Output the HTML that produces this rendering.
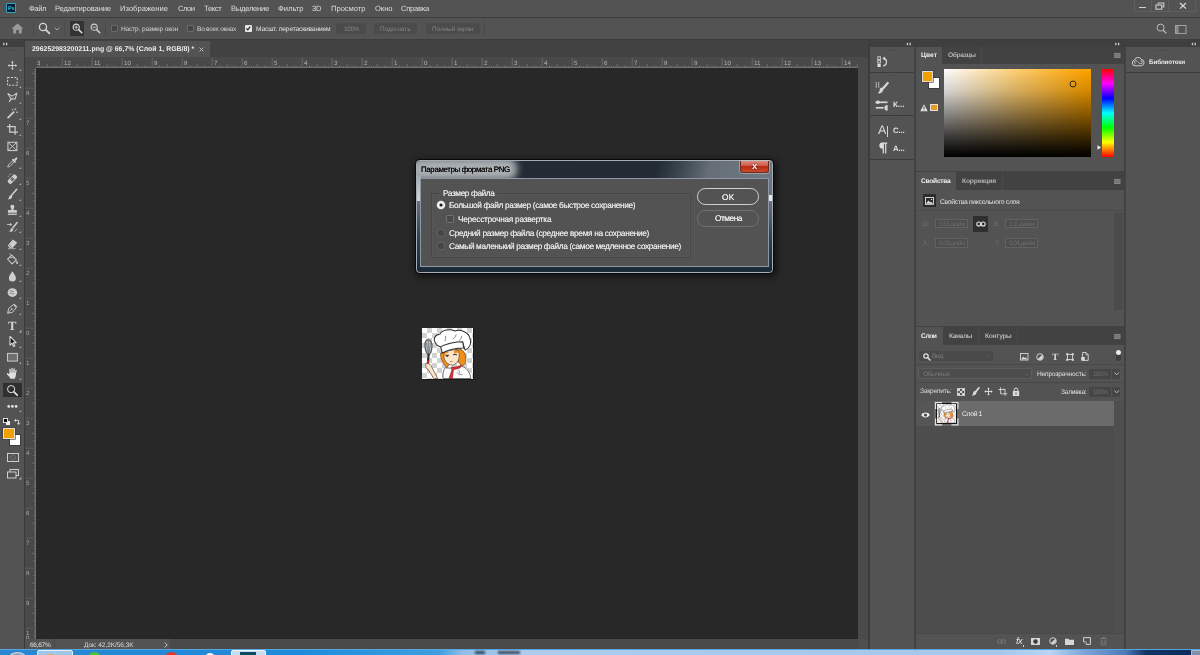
<!DOCTYPE html>
<html lang="ru"><head><meta charset="utf-8"><title>Photoshop</title>
<style>
html,body{margin:0;padding:0}
body{width:1200px;height:655px;overflow:hidden;position:relative;background:#424242;font-family:"Liberation Sans",sans-serif;}
#app{position:absolute;left:0;top:0;width:1200px;height:655px;overflow:hidden}
#app div,#app span,#app svg{position:absolute;display:block}
#app span{white-space:nowrap;will-change:transform;text-rendering:geometricPrecision}
#app svg{overflow:visible}
</style></head><body><div id="app">
<div style="left:0px;top:0px;width:1200px;height:17px;background:#535353;"></div>
<div style="left:0px;top:17px;width:1200px;height:1px;background:#3e3e3e;"></div>
<div style="left:6px;top:3px;width:10px;height:10px;background:#0a1f2b;border:1px solid #2fa3c7;box-sizing:border-box;border-radius:1px"></div>
<span style="left:7.6px;top:3.10px;font-size:5.6px;line-height:12px;color:#31c5f0;font-weight:bold;letter-spacing:-0.3px">Ps</span>
<span style="left:29px;top:3.20px;font-size:7.6px;line-height:12px;color:#dedede;letter-spacing:-0.421px;">Файл</span>
<span style="left:55px;top:3.20px;font-size:7.6px;line-height:12px;color:#dedede;letter-spacing:-0.135px;">Редактирование</span>
<span style="left:120px;top:3.20px;font-size:7.6px;line-height:12px;color:#dedede;letter-spacing:0.011px;">Изображение</span>
<span style="left:177.5px;top:3.20px;font-size:7.6px;line-height:12px;color:#dedede;letter-spacing:-0.495px;">Слои</span>
<span style="left:203.5px;top:3.20px;font-size:7.6px;line-height:12px;color:#dedede;letter-spacing:-0.327px;">Текст</span>
<span style="left:230.5px;top:3.20px;font-size:7.6px;line-height:12px;color:#dedede;letter-spacing:-0.252px;">Выделение</span>
<span style="left:277.5px;top:3.20px;font-size:7.6px;line-height:12px;color:#dedede;letter-spacing:-0.005px;">Фильтр</span>
<span style="left:312px;top:3.20px;font-size:7.6px;line-height:12px;color:#dedede;letter-spacing:-0.108px;">3D</span>
<span style="left:331px;top:3.20px;font-size:7.6px;line-height:12px;color:#dedede;letter-spacing:-0.026px;">Просмотр</span>
<span style="left:374.5px;top:3.20px;font-size:7.6px;line-height:12px;color:#dedede;letter-spacing:-0.040px;">Окно</span>
<span style="left:401px;top:3.20px;font-size:7.6px;line-height:12px;color:#dedede;letter-spacing:-0.259px;">Справка</span>
<div style="left:1134px;top:0px;width:62px;height:11.5px;background:transparent;border:1px solid #5e5e5e;border-top:none;box-sizing:border-box"></div>
<div style="left:1151px;top:0px;width:1px;height:11px;background:#5e5e5e;"></div>
<div style="left:1168px;top:0px;width:1px;height:11px;background:#5e5e5e;"></div>
<div style="left:1139.2px;top:7px;width:6.8px;height:1.4px;background:#d0d0d0;"></div>
<svg style="left:1155px;top:2px;" width="10" height="8" viewBox="0 0 10 8"><path d="M3.2 2.6V1h5.6v4H7.4" fill="none" stroke="#cfcfcf" stroke-width="1.1"/><rect x="1" y="3" width="5.8" height="4.2" fill="none" stroke="#cfcfcf" stroke-width="1.1"/></svg>
<svg style="left:1179px;top:2px;" width="8" height="8" viewBox="0 0 8 8"><path d="M1 1L7 6.6M7 1L1 6.6" stroke="#dcdcdc" stroke-width="1.2" fill="none"/></svg>
<div style="left:0px;top:18px;width:1200px;height:21px;background:#535353;"></div>
<div style="left:0px;top:39px;width:1200px;height:1px;background:#3c3c3c;"></div>
<svg style="left:11px;top:23px;" width="13" height="11" viewBox="0 0 13 11"><path d="M6.5 0.6L0.6 5.6h1.6V10.4h3V7h2.6v3.4h3V5.6h1.6z" fill="#9a9a9a"/></svg>
<div style="left:33px;top:21px;width:1px;height:15px;background:#4a4a4a;"></div>
<div style="left:64px;top:21px;width:1px;height:15px;background:#4a4a4a;"></div>
<div style="left:105px;top:21px;width:1px;height:15px;background:#4a4a4a;"></div>
<svg style="left:38px;top:22px;" width="13" height="13" viewBox="0 0 13 13"><circle cx="5" cy="5" r="3.6" fill="none" stroke="#d8d8d8" stroke-width="1.3"/><path d="M7.8 7.8L11.4 11.4" stroke="#d8d8d8" stroke-width="1.8" stroke-linecap="round"/></svg>
<svg style="left:54px;top:27px;" width="6" height="4" viewBox="0 0 6 4"><path d="M0.6 0.6L3 3L5.4 0.6" fill="none" stroke="#a8a8a8" stroke-width="1"/></svg>
<div style="left:69.5px;top:21px;width:14px;height:14.5px;background:#333333;"></div>
<svg style="left:71.5px;top:23px;" width="11" height="11" viewBox="0 0 11 11"><circle cx="4.2" cy="4.2" r="3.1" fill="none" stroke="#e0e0e0" stroke-width="1.1"/><path d="M6.6 6.6L9.8 9.8" stroke="#e0e0e0" stroke-width="1.5" stroke-linecap="round"/><path d="M2.6 4.2h3.2M4.2 2.6v3.2" stroke="#e0e0e0" stroke-width="0.9"/></svg>
<svg style="left:90px;top:23px;" width="11" height="11" viewBox="0 0 11 11"><circle cx="4.2" cy="4.2" r="3.1" fill="none" stroke="#cfcfcf" stroke-width="1.1"/><path d="M6.6 6.6L9.8 9.8" stroke="#cfcfcf" stroke-width="1.5" stroke-linecap="round"/><path d="M2.6 4.2h3.2" stroke="#cfcfcf" stroke-width="0.9"/></svg>
<div style="left:111px;top:25px;width:6.5px;height:6.5px;background:#454545;border:1px solid #6a6a6a;box-sizing:border-box;border-radius:1px"></div>
<span style="left:121px;top:23.50px;font-size:6.6px;line-height:12px;color:#d2d2d2;letter-spacing:-0.170px;">Настр. размер окон</span>
<div style="left:187px;top:25px;width:6.5px;height:6.5px;background:#454545;border:1px solid #6a6a6a;box-sizing:border-box;border-radius:1px"></div>
<span style="left:197px;top:23.50px;font-size:6.6px;line-height:12px;color:#d2d2d2;letter-spacing:-0.267px;">Во всех окнах</span>
<div style="left:245px;top:25px;width:6.5px;height:6.5px;background:#e6e6e6;border-radius:1px"></div>
<svg style="left:245px;top:25px;" width="6.5" height="6.5" viewBox="0 0 6.5 6.5"><path d="M1.4 3.3L2.8 4.8L5.2 1.6" fill="none" stroke="#1e1e1e" stroke-width="1.1"/></svg>
<span style="left:255.5px;top:23.50px;font-size:6.6px;line-height:12px;color:#e4e4e4;letter-spacing:-0.127px;">Масшт. перетаскиванием</span>
<div style="left:336px;top:22.5px;width:29.5px;height:11.5px;background:#4b4b4b;border-radius:1px"></div>
<span style="left:344px;top:23.50px;font-size:6.4px;line-height:12px;color:#858585;letter-spacing:-0.342px;">100%</span>
<div style="left:374px;top:22.5px;width:43px;height:11.5px;background:#4b4b4b;border-radius:1px"></div>
<span style="left:380px;top:23.50px;font-size:6.4px;line-height:12px;color:#858585;letter-spacing:-0.041px;">Подогнать</span>
<div style="left:425.5px;top:22.5px;width:54.5px;height:11.5px;background:#4b4b4b;border-radius:1px"></div>
<span style="left:432px;top:23.50px;font-size:6.4px;line-height:12px;color:#858585;letter-spacing:-0.038px;">Полный экран</span>
<div style="left:484px;top:21px;width:1px;height:15px;background:#4a4a4a;"></div>
<svg style="left:1156px;top:23px;" width="12" height="12" viewBox="0 0 12 12"><circle cx="4.6" cy="4.6" r="3.5" fill="none" stroke="#bdbdbd" stroke-width="1"/><path d="M7.2 7.2L10.4 10.4" stroke="#bdbdbd" stroke-width="1.3"/></svg>
<svg style="left:1175px;top:24.5px;" width="12" height="9.5" viewBox="0 0 12 9.5"><rect x="0.5" y="0.5" width="10.5" height="8" fill="none" stroke="#a0a0a0" stroke-width="1"/><rect x="1" y="1" width="2.6" height="7" fill="#8a8a8a"/></svg>
<div style="left:0px;top:40px;width:24.2px;height:609px;background:#535353;"></div>
<div style="left:0px;top:40px;width:24.2px;height:6.5px;background:#3f3f3f;"></div>
<div style="left:24.2px;top:40px;width:1px;height:609px;background:#3a3a3a;"></div>
<svg style="left:2.5px;top:41.5px;" width="6" height="4" viewBox="0 0 6 4"><path d="M0.3 0.3L2.1 2L0.3 3.7zM3 0.3L4.8 2L3 3.7z" fill="#d0d0d0"/></svg>
<div style="left:6px;top:50px;width:13px;height:1px;background:#4c4c4c;"></div>
<div style="left:25.2px;top:41px;width:184.8px;height:16.2px;background:#535353;"></div>
<span style="left:31.5px;top:44.00px;font-size:6.9px;line-height:12px;color:#ededed;font-weight:bold;letter-spacing:0.025px;">296252983200211.png @ 66,7% (Слой 1, RGB/8) *</span>
<svg style="left:199px;top:47px;" width="5" height="5" viewBox="0 0 5 5"><path d="M0.6 0.6L4.4 4.4M4.4 0.6L0.6 4.4" stroke="#b8b8b8" stroke-width="1"/></svg>
<div style="left:25.2px;top:57.2px;width:832.6px;height:10.8px;background:#494949;"></div>
<div style="left:25.2px;top:57.2px;width:10.8px;height:581.8px;background:#494949;"></div>
<div style="left:36px;top:68px;width:821.8px;height:571px;background:#282828;"></div>
<div style="left:36px;top:67.2px;width:821.8px;height:0.8px;background:#6a6a6a;"></div>
<svg style="left:0px;top:0px;" width="1200" height="70" viewBox="0 0 1200 70"><rect x="37.42" y="66.30" width="0.8" height="1.7" fill="#7c7c7c"/><rect x="39.30" y="65.40" width="0.8" height="2.6" fill="#7c7c7c"/><rect x="41.17" y="66.30" width="0.8" height="1.7" fill="#7c7c7c"/><rect x="43.05" y="66.30" width="0.8" height="1.7" fill="#7c7c7c"/><rect x="44.92" y="66.30" width="0.8" height="1.7" fill="#7c7c7c"/><rect x="46.80" y="64.40" width="0.8" height="3.6" fill="#7c7c7c"/><rect x="48.67" y="66.30" width="0.8" height="1.7" fill="#7c7c7c"/><rect x="50.55" y="66.30" width="0.8" height="1.7" fill="#7c7c7c"/><rect x="52.42" y="66.30" width="0.8" height="1.7" fill="#7c7c7c"/><rect x="54.30" y="65.40" width="0.8" height="2.6" fill="#7c7c7c"/><rect x="56.17" y="66.30" width="0.8" height="1.7" fill="#7c7c7c"/><rect x="58.05" y="66.30" width="0.8" height="1.7" fill="#7c7c7c"/><rect x="59.92" y="66.30" width="0.8" height="1.7" fill="#7c7c7c"/><rect x="61.70" y="58" width="0.9" height="10" fill="#6c6c6c"/><rect x="63.67" y="66.30" width="0.8" height="1.7" fill="#7c7c7c"/><rect x="65.55" y="66.30" width="0.8" height="1.7" fill="#7c7c7c"/><rect x="67.42" y="66.30" width="0.8" height="1.7" fill="#7c7c7c"/><rect x="69.30" y="65.40" width="0.8" height="2.6" fill="#7c7c7c"/><rect x="71.17" y="66.30" width="0.8" height="1.7" fill="#7c7c7c"/><rect x="73.05" y="66.30" width="0.8" height="1.7" fill="#7c7c7c"/><rect x="74.92" y="66.30" width="0.8" height="1.7" fill="#7c7c7c"/><rect x="76.80" y="64.40" width="0.8" height="3.6" fill="#7c7c7c"/><rect x="78.67" y="66.30" width="0.8" height="1.7" fill="#7c7c7c"/><rect x="80.55" y="66.30" width="0.8" height="1.7" fill="#7c7c7c"/><rect x="82.42" y="66.30" width="0.8" height="1.7" fill="#7c7c7c"/><rect x="84.30" y="65.40" width="0.8" height="2.6" fill="#7c7c7c"/><rect x="86.17" y="66.30" width="0.8" height="1.7" fill="#7c7c7c"/><rect x="88.05" y="66.30" width="0.8" height="1.7" fill="#7c7c7c"/><rect x="89.92" y="66.30" width="0.8" height="1.7" fill="#7c7c7c"/><rect x="91.70" y="58" width="0.9" height="10" fill="#6c6c6c"/><rect x="93.67" y="66.30" width="0.8" height="1.7" fill="#7c7c7c"/><rect x="95.55" y="66.30" width="0.8" height="1.7" fill="#7c7c7c"/><rect x="97.42" y="66.30" width="0.8" height="1.7" fill="#7c7c7c"/><rect x="99.30" y="65.40" width="0.8" height="2.6" fill="#7c7c7c"/><rect x="101.17" y="66.30" width="0.8" height="1.7" fill="#7c7c7c"/><rect x="103.05" y="66.30" width="0.8" height="1.7" fill="#7c7c7c"/><rect x="104.92" y="66.30" width="0.8" height="1.7" fill="#7c7c7c"/><rect x="106.80" y="64.40" width="0.8" height="3.6" fill="#7c7c7c"/><rect x="108.67" y="66.30" width="0.8" height="1.7" fill="#7c7c7c"/><rect x="110.55" y="66.30" width="0.8" height="1.7" fill="#7c7c7c"/><rect x="112.42" y="66.30" width="0.8" height="1.7" fill="#7c7c7c"/><rect x="114.30" y="65.40" width="0.8" height="2.6" fill="#7c7c7c"/><rect x="116.17" y="66.30" width="0.8" height="1.7" fill="#7c7c7c"/><rect x="118.05" y="66.30" width="0.8" height="1.7" fill="#7c7c7c"/><rect x="119.92" y="66.30" width="0.8" height="1.7" fill="#7c7c7c"/><rect x="121.70" y="58" width="0.9" height="10" fill="#6c6c6c"/><rect x="123.67" y="66.30" width="0.8" height="1.7" fill="#7c7c7c"/><rect x="125.55" y="66.30" width="0.8" height="1.7" fill="#7c7c7c"/><rect x="127.42" y="66.30" width="0.8" height="1.7" fill="#7c7c7c"/><rect x="129.30" y="65.40" width="0.8" height="2.6" fill="#7c7c7c"/><rect x="131.17" y="66.30" width="0.8" height="1.7" fill="#7c7c7c"/><rect x="133.05" y="66.30" width="0.8" height="1.7" fill="#7c7c7c"/><rect x="134.92" y="66.30" width="0.8" height="1.7" fill="#7c7c7c"/><rect x="136.80" y="64.40" width="0.8" height="3.6" fill="#7c7c7c"/><rect x="138.67" y="66.30" width="0.8" height="1.7" fill="#7c7c7c"/><rect x="140.55" y="66.30" width="0.8" height="1.7" fill="#7c7c7c"/><rect x="142.42" y="66.30" width="0.8" height="1.7" fill="#7c7c7c"/><rect x="144.30" y="65.40" width="0.8" height="2.6" fill="#7c7c7c"/><rect x="146.17" y="66.30" width="0.8" height="1.7" fill="#7c7c7c"/><rect x="148.05" y="66.30" width="0.8" height="1.7" fill="#7c7c7c"/><rect x="149.92" y="66.30" width="0.8" height="1.7" fill="#7c7c7c"/><rect x="151.70" y="58" width="0.9" height="10" fill="#6c6c6c"/><rect x="153.67" y="66.30" width="0.8" height="1.7" fill="#7c7c7c"/><rect x="155.55" y="66.30" width="0.8" height="1.7" fill="#7c7c7c"/><rect x="157.42" y="66.30" width="0.8" height="1.7" fill="#7c7c7c"/><rect x="159.30" y="65.40" width="0.8" height="2.6" fill="#7c7c7c"/><rect x="161.17" y="66.30" width="0.8" height="1.7" fill="#7c7c7c"/><rect x="163.05" y="66.30" width="0.8" height="1.7" fill="#7c7c7c"/><rect x="164.92" y="66.30" width="0.8" height="1.7" fill="#7c7c7c"/><rect x="166.80" y="64.40" width="0.8" height="3.6" fill="#7c7c7c"/><rect x="168.67" y="66.30" width="0.8" height="1.7" fill="#7c7c7c"/><rect x="170.55" y="66.30" width="0.8" height="1.7" fill="#7c7c7c"/><rect x="172.42" y="66.30" width="0.8" height="1.7" fill="#7c7c7c"/><rect x="174.30" y="65.40" width="0.8" height="2.6" fill="#7c7c7c"/><rect x="176.17" y="66.30" width="0.8" height="1.7" fill="#7c7c7c"/><rect x="178.05" y="66.30" width="0.8" height="1.7" fill="#7c7c7c"/><rect x="179.92" y="66.30" width="0.8" height="1.7" fill="#7c7c7c"/><rect x="181.70" y="58" width="0.9" height="10" fill="#6c6c6c"/><rect x="183.67" y="66.30" width="0.8" height="1.7" fill="#7c7c7c"/><rect x="185.55" y="66.30" width="0.8" height="1.7" fill="#7c7c7c"/><rect x="187.42" y="66.30" width="0.8" height="1.7" fill="#7c7c7c"/><rect x="189.30" y="65.40" width="0.8" height="2.6" fill="#7c7c7c"/><rect x="191.17" y="66.30" width="0.8" height="1.7" fill="#7c7c7c"/><rect x="193.05" y="66.30" width="0.8" height="1.7" fill="#7c7c7c"/><rect x="194.92" y="66.30" width="0.8" height="1.7" fill="#7c7c7c"/><rect x="196.80" y="64.40" width="0.8" height="3.6" fill="#7c7c7c"/><rect x="198.67" y="66.30" width="0.8" height="1.7" fill="#7c7c7c"/><rect x="200.55" y="66.30" width="0.8" height="1.7" fill="#7c7c7c"/><rect x="202.42" y="66.30" width="0.8" height="1.7" fill="#7c7c7c"/><rect x="204.30" y="65.40" width="0.8" height="2.6" fill="#7c7c7c"/><rect x="206.17" y="66.30" width="0.8" height="1.7" fill="#7c7c7c"/><rect x="208.05" y="66.30" width="0.8" height="1.7" fill="#7c7c7c"/><rect x="209.92" y="66.30" width="0.8" height="1.7" fill="#7c7c7c"/><rect x="211.70" y="58" width="0.9" height="10" fill="#6c6c6c"/><rect x="213.67" y="66.30" width="0.8" height="1.7" fill="#7c7c7c"/><rect x="215.55" y="66.30" width="0.8" height="1.7" fill="#7c7c7c"/><rect x="217.42" y="66.30" width="0.8" height="1.7" fill="#7c7c7c"/><rect x="219.30" y="65.40" width="0.8" height="2.6" fill="#7c7c7c"/><rect x="221.17" y="66.30" width="0.8" height="1.7" fill="#7c7c7c"/><rect x="223.05" y="66.30" width="0.8" height="1.7" fill="#7c7c7c"/><rect x="224.92" y="66.30" width="0.8" height="1.7" fill="#7c7c7c"/><rect x="226.80" y="64.40" width="0.8" height="3.6" fill="#7c7c7c"/><rect x="228.67" y="66.30" width="0.8" height="1.7" fill="#7c7c7c"/><rect x="230.55" y="66.30" width="0.8" height="1.7" fill="#7c7c7c"/><rect x="232.42" y="66.30" width="0.8" height="1.7" fill="#7c7c7c"/><rect x="234.30" y="65.40" width="0.8" height="2.6" fill="#7c7c7c"/><rect x="236.17" y="66.30" width="0.8" height="1.7" fill="#7c7c7c"/><rect x="238.05" y="66.30" width="0.8" height="1.7" fill="#7c7c7c"/><rect x="239.92" y="66.30" width="0.8" height="1.7" fill="#7c7c7c"/><rect x="241.70" y="58" width="0.9" height="10" fill="#6c6c6c"/><rect x="243.67" y="66.30" width="0.8" height="1.7" fill="#7c7c7c"/><rect x="245.55" y="66.30" width="0.8" height="1.7" fill="#7c7c7c"/><rect x="247.42" y="66.30" width="0.8" height="1.7" fill="#7c7c7c"/><rect x="249.30" y="65.40" width="0.8" height="2.6" fill="#7c7c7c"/><rect x="251.17" y="66.30" width="0.8" height="1.7" fill="#7c7c7c"/><rect x="253.05" y="66.30" width="0.8" height="1.7" fill="#7c7c7c"/><rect x="254.92" y="66.30" width="0.8" height="1.7" fill="#7c7c7c"/><rect x="256.80" y="64.40" width="0.8" height="3.6" fill="#7c7c7c"/><rect x="258.68" y="66.30" width="0.8" height="1.7" fill="#7c7c7c"/><rect x="260.55" y="66.30" width="0.8" height="1.7" fill="#7c7c7c"/><rect x="262.43" y="66.30" width="0.8" height="1.7" fill="#7c7c7c"/><rect x="264.30" y="65.40" width="0.8" height="2.6" fill="#7c7c7c"/><rect x="266.18" y="66.30" width="0.8" height="1.7" fill="#7c7c7c"/><rect x="268.05" y="66.30" width="0.8" height="1.7" fill="#7c7c7c"/><rect x="269.93" y="66.30" width="0.8" height="1.7" fill="#7c7c7c"/><rect x="271.70" y="58" width="0.9" height="10" fill="#6c6c6c"/><rect x="273.68" y="66.30" width="0.8" height="1.7" fill="#7c7c7c"/><rect x="275.55" y="66.30" width="0.8" height="1.7" fill="#7c7c7c"/><rect x="277.43" y="66.30" width="0.8" height="1.7" fill="#7c7c7c"/><rect x="279.30" y="65.40" width="0.8" height="2.6" fill="#7c7c7c"/><rect x="281.18" y="66.30" width="0.8" height="1.7" fill="#7c7c7c"/><rect x="283.05" y="66.30" width="0.8" height="1.7" fill="#7c7c7c"/><rect x="284.93" y="66.30" width="0.8" height="1.7" fill="#7c7c7c"/><rect x="286.80" y="64.40" width="0.8" height="3.6" fill="#7c7c7c"/><rect x="288.68" y="66.30" width="0.8" height="1.7" fill="#7c7c7c"/><rect x="290.55" y="66.30" width="0.8" height="1.7" fill="#7c7c7c"/><rect x="292.43" y="66.30" width="0.8" height="1.7" fill="#7c7c7c"/><rect x="294.30" y="65.40" width="0.8" height="2.6" fill="#7c7c7c"/><rect x="296.18" y="66.30" width="0.8" height="1.7" fill="#7c7c7c"/><rect x="298.05" y="66.30" width="0.8" height="1.7" fill="#7c7c7c"/><rect x="299.93" y="66.30" width="0.8" height="1.7" fill="#7c7c7c"/><rect x="301.70" y="58" width="0.9" height="10" fill="#6c6c6c"/><rect x="303.68" y="66.30" width="0.8" height="1.7" fill="#7c7c7c"/><rect x="305.55" y="66.30" width="0.8" height="1.7" fill="#7c7c7c"/><rect x="307.43" y="66.30" width="0.8" height="1.7" fill="#7c7c7c"/><rect x="309.30" y="65.40" width="0.8" height="2.6" fill="#7c7c7c"/><rect x="311.18" y="66.30" width="0.8" height="1.7" fill="#7c7c7c"/><rect x="313.05" y="66.30" width="0.8" height="1.7" fill="#7c7c7c"/><rect x="314.93" y="66.30" width="0.8" height="1.7" fill="#7c7c7c"/><rect x="316.80" y="64.40" width="0.8" height="3.6" fill="#7c7c7c"/><rect x="318.68" y="66.30" width="0.8" height="1.7" fill="#7c7c7c"/><rect x="320.55" y="66.30" width="0.8" height="1.7" fill="#7c7c7c"/><rect x="322.43" y="66.30" width="0.8" height="1.7" fill="#7c7c7c"/><rect x="324.30" y="65.40" width="0.8" height="2.6" fill="#7c7c7c"/><rect x="326.18" y="66.30" width="0.8" height="1.7" fill="#7c7c7c"/><rect x="328.05" y="66.30" width="0.8" height="1.7" fill="#7c7c7c"/><rect x="329.93" y="66.30" width="0.8" height="1.7" fill="#7c7c7c"/><rect x="331.70" y="58" width="0.9" height="10" fill="#6c6c6c"/><rect x="333.68" y="66.30" width="0.8" height="1.7" fill="#7c7c7c"/><rect x="335.55" y="66.30" width="0.8" height="1.7" fill="#7c7c7c"/><rect x="337.43" y="66.30" width="0.8" height="1.7" fill="#7c7c7c"/><rect x="339.30" y="65.40" width="0.8" height="2.6" fill="#7c7c7c"/><rect x="341.18" y="66.30" width="0.8" height="1.7" fill="#7c7c7c"/><rect x="343.05" y="66.30" width="0.8" height="1.7" fill="#7c7c7c"/><rect x="344.93" y="66.30" width="0.8" height="1.7" fill="#7c7c7c"/><rect x="346.80" y="64.40" width="0.8" height="3.6" fill="#7c7c7c"/><rect x="348.68" y="66.30" width="0.8" height="1.7" fill="#7c7c7c"/><rect x="350.55" y="66.30" width="0.8" height="1.7" fill="#7c7c7c"/><rect x="352.43" y="66.30" width="0.8" height="1.7" fill="#7c7c7c"/><rect x="354.30" y="65.40" width="0.8" height="2.6" fill="#7c7c7c"/><rect x="356.18" y="66.30" width="0.8" height="1.7" fill="#7c7c7c"/><rect x="358.05" y="66.30" width="0.8" height="1.7" fill="#7c7c7c"/><rect x="359.93" y="66.30" width="0.8" height="1.7" fill="#7c7c7c"/><rect x="361.70" y="58" width="0.9" height="10" fill="#6c6c6c"/><rect x="363.68" y="66.30" width="0.8" height="1.7" fill="#7c7c7c"/><rect x="365.55" y="66.30" width="0.8" height="1.7" fill="#7c7c7c"/><rect x="367.43" y="66.30" width="0.8" height="1.7" fill="#7c7c7c"/><rect x="369.30" y="65.40" width="0.8" height="2.6" fill="#7c7c7c"/><rect x="371.18" y="66.30" width="0.8" height="1.7" fill="#7c7c7c"/><rect x="373.05" y="66.30" width="0.8" height="1.7" fill="#7c7c7c"/><rect x="374.93" y="66.30" width="0.8" height="1.7" fill="#7c7c7c"/><rect x="376.80" y="64.40" width="0.8" height="3.6" fill="#7c7c7c"/><rect x="378.68" y="66.30" width="0.8" height="1.7" fill="#7c7c7c"/><rect x="380.55" y="66.30" width="0.8" height="1.7" fill="#7c7c7c"/><rect x="382.43" y="66.30" width="0.8" height="1.7" fill="#7c7c7c"/><rect x="384.30" y="65.40" width="0.8" height="2.6" fill="#7c7c7c"/><rect x="386.18" y="66.30" width="0.8" height="1.7" fill="#7c7c7c"/><rect x="388.05" y="66.30" width="0.8" height="1.7" fill="#7c7c7c"/><rect x="389.93" y="66.30" width="0.8" height="1.7" fill="#7c7c7c"/><rect x="391.70" y="58" width="0.9" height="10" fill="#6c6c6c"/><rect x="393.68" y="66.30" width="0.8" height="1.7" fill="#7c7c7c"/><rect x="395.55" y="66.30" width="0.8" height="1.7" fill="#7c7c7c"/><rect x="397.43" y="66.30" width="0.8" height="1.7" fill="#7c7c7c"/><rect x="399.30" y="65.40" width="0.8" height="2.6" fill="#7c7c7c"/><rect x="401.18" y="66.30" width="0.8" height="1.7" fill="#7c7c7c"/><rect x="403.05" y="66.30" width="0.8" height="1.7" fill="#7c7c7c"/><rect x="404.93" y="66.30" width="0.8" height="1.7" fill="#7c7c7c"/><rect x="406.80" y="64.40" width="0.8" height="3.6" fill="#7c7c7c"/><rect x="408.68" y="66.30" width="0.8" height="1.7" fill="#7c7c7c"/><rect x="410.55" y="66.30" width="0.8" height="1.7" fill="#7c7c7c"/><rect x="412.43" y="66.30" width="0.8" height="1.7" fill="#7c7c7c"/><rect x="414.30" y="65.40" width="0.8" height="2.6" fill="#7c7c7c"/><rect x="416.18" y="66.30" width="0.8" height="1.7" fill="#7c7c7c"/><rect x="418.05" y="66.30" width="0.8" height="1.7" fill="#7c7c7c"/><rect x="419.93" y="66.30" width="0.8" height="1.7" fill="#7c7c7c"/><rect x="421.70" y="58" width="0.9" height="10" fill="#6c6c6c"/><rect x="423.68" y="66.30" width="0.8" height="1.7" fill="#7c7c7c"/><rect x="425.55" y="66.30" width="0.8" height="1.7" fill="#7c7c7c"/><rect x="427.43" y="66.30" width="0.8" height="1.7" fill="#7c7c7c"/><rect x="429.30" y="65.40" width="0.8" height="2.6" fill="#7c7c7c"/><rect x="431.18" y="66.30" width="0.8" height="1.7" fill="#7c7c7c"/><rect x="433.05" y="66.30" width="0.8" height="1.7" fill="#7c7c7c"/><rect x="434.93" y="66.30" width="0.8" height="1.7" fill="#7c7c7c"/><rect x="436.80" y="64.40" width="0.8" height="3.6" fill="#7c7c7c"/><rect x="438.68" y="66.30" width="0.8" height="1.7" fill="#7c7c7c"/><rect x="440.55" y="66.30" width="0.8" height="1.7" fill="#7c7c7c"/><rect x="442.43" y="66.30" width="0.8" height="1.7" fill="#7c7c7c"/><rect x="444.30" y="65.40" width="0.8" height="2.6" fill="#7c7c7c"/><rect x="446.18" y="66.30" width="0.8" height="1.7" fill="#7c7c7c"/><rect x="448.05" y="66.30" width="0.8" height="1.7" fill="#7c7c7c"/><rect x="449.93" y="66.30" width="0.8" height="1.7" fill="#7c7c7c"/><rect x="451.70" y="58" width="0.9" height="10" fill="#6c6c6c"/><rect x="453.68" y="66.30" width="0.8" height="1.7" fill="#7c7c7c"/><rect x="455.55" y="66.30" width="0.8" height="1.7" fill="#7c7c7c"/><rect x="457.43" y="66.30" width="0.8" height="1.7" fill="#7c7c7c"/><rect x="459.30" y="65.40" width="0.8" height="2.6" fill="#7c7c7c"/><rect x="461.18" y="66.30" width="0.8" height="1.7" fill="#7c7c7c"/><rect x="463.05" y="66.30" width="0.8" height="1.7" fill="#7c7c7c"/><rect x="464.93" y="66.30" width="0.8" height="1.7" fill="#7c7c7c"/><rect x="466.80" y="64.40" width="0.8" height="3.6" fill="#7c7c7c"/><rect x="468.68" y="66.30" width="0.8" height="1.7" fill="#7c7c7c"/><rect x="470.55" y="66.30" width="0.8" height="1.7" fill="#7c7c7c"/><rect x="472.43" y="66.30" width="0.8" height="1.7" fill="#7c7c7c"/><rect x="474.30" y="65.40" width="0.8" height="2.6" fill="#7c7c7c"/><rect x="476.18" y="66.30" width="0.8" height="1.7" fill="#7c7c7c"/><rect x="478.05" y="66.30" width="0.8" height="1.7" fill="#7c7c7c"/><rect x="479.93" y="66.30" width="0.8" height="1.7" fill="#7c7c7c"/><rect x="481.70" y="58" width="0.9" height="10" fill="#6c6c6c"/><rect x="483.68" y="66.30" width="0.8" height="1.7" fill="#7c7c7c"/><rect x="485.55" y="66.30" width="0.8" height="1.7" fill="#7c7c7c"/><rect x="487.43" y="66.30" width="0.8" height="1.7" fill="#7c7c7c"/><rect x="489.30" y="65.40" width="0.8" height="2.6" fill="#7c7c7c"/><rect x="491.18" y="66.30" width="0.8" height="1.7" fill="#7c7c7c"/><rect x="493.05" y="66.30" width="0.8" height="1.7" fill="#7c7c7c"/><rect x="494.93" y="66.30" width="0.8" height="1.7" fill="#7c7c7c"/><rect x="496.80" y="64.40" width="0.8" height="3.6" fill="#7c7c7c"/><rect x="498.68" y="66.30" width="0.8" height="1.7" fill="#7c7c7c"/><rect x="500.55" y="66.30" width="0.8" height="1.7" fill="#7c7c7c"/><rect x="502.43" y="66.30" width="0.8" height="1.7" fill="#7c7c7c"/><rect x="504.30" y="65.40" width="0.8" height="2.6" fill="#7c7c7c"/><rect x="506.18" y="66.30" width="0.8" height="1.7" fill="#7c7c7c"/><rect x="508.05" y="66.30" width="0.8" height="1.7" fill="#7c7c7c"/><rect x="509.93" y="66.30" width="0.8" height="1.7" fill="#7c7c7c"/><rect x="511.70" y="58" width="0.9" height="10" fill="#6c6c6c"/><rect x="513.68" y="66.30" width="0.8" height="1.7" fill="#7c7c7c"/><rect x="515.55" y="66.30" width="0.8" height="1.7" fill="#7c7c7c"/><rect x="517.43" y="66.30" width="0.8" height="1.7" fill="#7c7c7c"/><rect x="519.30" y="65.40" width="0.8" height="2.6" fill="#7c7c7c"/><rect x="521.18" y="66.30" width="0.8" height="1.7" fill="#7c7c7c"/><rect x="523.05" y="66.30" width="0.8" height="1.7" fill="#7c7c7c"/><rect x="524.93" y="66.30" width="0.8" height="1.7" fill="#7c7c7c"/><rect x="526.80" y="64.40" width="0.8" height="3.6" fill="#7c7c7c"/><rect x="528.68" y="66.30" width="0.8" height="1.7" fill="#7c7c7c"/><rect x="530.55" y="66.30" width="0.8" height="1.7" fill="#7c7c7c"/><rect x="532.43" y="66.30" width="0.8" height="1.7" fill="#7c7c7c"/><rect x="534.30" y="65.40" width="0.8" height="2.6" fill="#7c7c7c"/><rect x="536.18" y="66.30" width="0.8" height="1.7" fill="#7c7c7c"/><rect x="538.05" y="66.30" width="0.8" height="1.7" fill="#7c7c7c"/><rect x="539.93" y="66.30" width="0.8" height="1.7" fill="#7c7c7c"/><rect x="541.70" y="58" width="0.9" height="10" fill="#6c6c6c"/><rect x="543.68" y="66.30" width="0.8" height="1.7" fill="#7c7c7c"/><rect x="545.55" y="66.30" width="0.8" height="1.7" fill="#7c7c7c"/><rect x="547.43" y="66.30" width="0.8" height="1.7" fill="#7c7c7c"/><rect x="549.30" y="65.40" width="0.8" height="2.6" fill="#7c7c7c"/><rect x="551.18" y="66.30" width="0.8" height="1.7" fill="#7c7c7c"/><rect x="553.05" y="66.30" width="0.8" height="1.7" fill="#7c7c7c"/><rect x="554.93" y="66.30" width="0.8" height="1.7" fill="#7c7c7c"/><rect x="556.80" y="64.40" width="0.8" height="3.6" fill="#7c7c7c"/><rect x="558.68" y="66.30" width="0.8" height="1.7" fill="#7c7c7c"/><rect x="560.55" y="66.30" width="0.8" height="1.7" fill="#7c7c7c"/><rect x="562.43" y="66.30" width="0.8" height="1.7" fill="#7c7c7c"/><rect x="564.30" y="65.40" width="0.8" height="2.6" fill="#7c7c7c"/><rect x="566.18" y="66.30" width="0.8" height="1.7" fill="#7c7c7c"/><rect x="568.05" y="66.30" width="0.8" height="1.7" fill="#7c7c7c"/><rect x="569.93" y="66.30" width="0.8" height="1.7" fill="#7c7c7c"/><rect x="571.70" y="58" width="0.9" height="10" fill="#6c6c6c"/><rect x="573.68" y="66.30" width="0.8" height="1.7" fill="#7c7c7c"/><rect x="575.55" y="66.30" width="0.8" height="1.7" fill="#7c7c7c"/><rect x="577.43" y="66.30" width="0.8" height="1.7" fill="#7c7c7c"/><rect x="579.30" y="65.40" width="0.8" height="2.6" fill="#7c7c7c"/><rect x="581.18" y="66.30" width="0.8" height="1.7" fill="#7c7c7c"/><rect x="583.05" y="66.30" width="0.8" height="1.7" fill="#7c7c7c"/><rect x="584.93" y="66.30" width="0.8" height="1.7" fill="#7c7c7c"/><rect x="586.80" y="64.40" width="0.8" height="3.6" fill="#7c7c7c"/><rect x="588.68" y="66.30" width="0.8" height="1.7" fill="#7c7c7c"/><rect x="590.55" y="66.30" width="0.8" height="1.7" fill="#7c7c7c"/><rect x="592.43" y="66.30" width="0.8" height="1.7" fill="#7c7c7c"/><rect x="594.30" y="65.40" width="0.8" height="2.6" fill="#7c7c7c"/><rect x="596.18" y="66.30" width="0.8" height="1.7" fill="#7c7c7c"/><rect x="598.05" y="66.30" width="0.8" height="1.7" fill="#7c7c7c"/><rect x="599.93" y="66.30" width="0.8" height="1.7" fill="#7c7c7c"/><rect x="601.70" y="58" width="0.9" height="10" fill="#6c6c6c"/><rect x="603.68" y="66.30" width="0.8" height="1.7" fill="#7c7c7c"/><rect x="605.55" y="66.30" width="0.8" height="1.7" fill="#7c7c7c"/><rect x="607.43" y="66.30" width="0.8" height="1.7" fill="#7c7c7c"/><rect x="609.30" y="65.40" width="0.8" height="2.6" fill="#7c7c7c"/><rect x="611.18" y="66.30" width="0.8" height="1.7" fill="#7c7c7c"/><rect x="613.05" y="66.30" width="0.8" height="1.7" fill="#7c7c7c"/><rect x="614.93" y="66.30" width="0.8" height="1.7" fill="#7c7c7c"/><rect x="616.80" y="64.40" width="0.8" height="3.6" fill="#7c7c7c"/><rect x="618.68" y="66.30" width="0.8" height="1.7" fill="#7c7c7c"/><rect x="620.55" y="66.30" width="0.8" height="1.7" fill="#7c7c7c"/><rect x="622.43" y="66.30" width="0.8" height="1.7" fill="#7c7c7c"/><rect x="624.30" y="65.40" width="0.8" height="2.6" fill="#7c7c7c"/><rect x="626.18" y="66.30" width="0.8" height="1.7" fill="#7c7c7c"/><rect x="628.05" y="66.30" width="0.8" height="1.7" fill="#7c7c7c"/><rect x="629.93" y="66.30" width="0.8" height="1.7" fill="#7c7c7c"/><rect x="631.70" y="58" width="0.9" height="10" fill="#6c6c6c"/><rect x="633.68" y="66.30" width="0.8" height="1.7" fill="#7c7c7c"/><rect x="635.55" y="66.30" width="0.8" height="1.7" fill="#7c7c7c"/><rect x="637.43" y="66.30" width="0.8" height="1.7" fill="#7c7c7c"/><rect x="639.30" y="65.40" width="0.8" height="2.6" fill="#7c7c7c"/><rect x="641.18" y="66.30" width="0.8" height="1.7" fill="#7c7c7c"/><rect x="643.05" y="66.30" width="0.8" height="1.7" fill="#7c7c7c"/><rect x="644.93" y="66.30" width="0.8" height="1.7" fill="#7c7c7c"/><rect x="646.80" y="64.40" width="0.8" height="3.6" fill="#7c7c7c"/><rect x="648.68" y="66.30" width="0.8" height="1.7" fill="#7c7c7c"/><rect x="650.55" y="66.30" width="0.8" height="1.7" fill="#7c7c7c"/><rect x="652.43" y="66.30" width="0.8" height="1.7" fill="#7c7c7c"/><rect x="654.30" y="65.40" width="0.8" height="2.6" fill="#7c7c7c"/><rect x="656.18" y="66.30" width="0.8" height="1.7" fill="#7c7c7c"/><rect x="658.05" y="66.30" width="0.8" height="1.7" fill="#7c7c7c"/><rect x="659.93" y="66.30" width="0.8" height="1.7" fill="#7c7c7c"/><rect x="661.70" y="58" width="0.9" height="10" fill="#6c6c6c"/><rect x="663.68" y="66.30" width="0.8" height="1.7" fill="#7c7c7c"/><rect x="665.55" y="66.30" width="0.8" height="1.7" fill="#7c7c7c"/><rect x="667.43" y="66.30" width="0.8" height="1.7" fill="#7c7c7c"/><rect x="669.30" y="65.40" width="0.8" height="2.6" fill="#7c7c7c"/><rect x="671.18" y="66.30" width="0.8" height="1.7" fill="#7c7c7c"/><rect x="673.05" y="66.30" width="0.8" height="1.7" fill="#7c7c7c"/><rect x="674.93" y="66.30" width="0.8" height="1.7" fill="#7c7c7c"/><rect x="676.80" y="64.40" width="0.8" height="3.6" fill="#7c7c7c"/><rect x="678.68" y="66.30" width="0.8" height="1.7" fill="#7c7c7c"/><rect x="680.55" y="66.30" width="0.8" height="1.7" fill="#7c7c7c"/><rect x="682.43" y="66.30" width="0.8" height="1.7" fill="#7c7c7c"/><rect x="684.30" y="65.40" width="0.8" height="2.6" fill="#7c7c7c"/><rect x="686.18" y="66.30" width="0.8" height="1.7" fill="#7c7c7c"/><rect x="688.05" y="66.30" width="0.8" height="1.7" fill="#7c7c7c"/><rect x="689.93" y="66.30" width="0.8" height="1.7" fill="#7c7c7c"/><rect x="691.70" y="58" width="0.9" height="10" fill="#6c6c6c"/><rect x="693.68" y="66.30" width="0.8" height="1.7" fill="#7c7c7c"/><rect x="695.55" y="66.30" width="0.8" height="1.7" fill="#7c7c7c"/><rect x="697.43" y="66.30" width="0.8" height="1.7" fill="#7c7c7c"/><rect x="699.30" y="65.40" width="0.8" height="2.6" fill="#7c7c7c"/><rect x="701.18" y="66.30" width="0.8" height="1.7" fill="#7c7c7c"/><rect x="703.05" y="66.30" width="0.8" height="1.7" fill="#7c7c7c"/><rect x="704.93" y="66.30" width="0.8" height="1.7" fill="#7c7c7c"/><rect x="706.80" y="64.40" width="0.8" height="3.6" fill="#7c7c7c"/><rect x="708.68" y="66.30" width="0.8" height="1.7" fill="#7c7c7c"/><rect x="710.55" y="66.30" width="0.8" height="1.7" fill="#7c7c7c"/><rect x="712.43" y="66.30" width="0.8" height="1.7" fill="#7c7c7c"/><rect x="714.30" y="65.40" width="0.8" height="2.6" fill="#7c7c7c"/><rect x="716.18" y="66.30" width="0.8" height="1.7" fill="#7c7c7c"/><rect x="718.05" y="66.30" width="0.8" height="1.7" fill="#7c7c7c"/><rect x="719.93" y="66.30" width="0.8" height="1.7" fill="#7c7c7c"/><rect x="721.70" y="58" width="0.9" height="10" fill="#6c6c6c"/><rect x="723.68" y="66.30" width="0.8" height="1.7" fill="#7c7c7c"/><rect x="725.55" y="66.30" width="0.8" height="1.7" fill="#7c7c7c"/><rect x="727.43" y="66.30" width="0.8" height="1.7" fill="#7c7c7c"/><rect x="729.30" y="65.40" width="0.8" height="2.6" fill="#7c7c7c"/><rect x="731.18" y="66.30" width="0.8" height="1.7" fill="#7c7c7c"/><rect x="733.05" y="66.30" width="0.8" height="1.7" fill="#7c7c7c"/><rect x="734.93" y="66.30" width="0.8" height="1.7" fill="#7c7c7c"/><rect x="736.80" y="64.40" width="0.8" height="3.6" fill="#7c7c7c"/><rect x="738.68" y="66.30" width="0.8" height="1.7" fill="#7c7c7c"/><rect x="740.55" y="66.30" width="0.8" height="1.7" fill="#7c7c7c"/><rect x="742.43" y="66.30" width="0.8" height="1.7" fill="#7c7c7c"/><rect x="744.30" y="65.40" width="0.8" height="2.6" fill="#7c7c7c"/><rect x="746.18" y="66.30" width="0.8" height="1.7" fill="#7c7c7c"/><rect x="748.05" y="66.30" width="0.8" height="1.7" fill="#7c7c7c"/><rect x="749.93" y="66.30" width="0.8" height="1.7" fill="#7c7c7c"/><rect x="751.70" y="58" width="0.9" height="10" fill="#6c6c6c"/><rect x="753.68" y="66.30" width="0.8" height="1.7" fill="#7c7c7c"/><rect x="755.55" y="66.30" width="0.8" height="1.7" fill="#7c7c7c"/><rect x="757.43" y="66.30" width="0.8" height="1.7" fill="#7c7c7c"/><rect x="759.30" y="65.40" width="0.8" height="2.6" fill="#7c7c7c"/><rect x="761.18" y="66.30" width="0.8" height="1.7" fill="#7c7c7c"/><rect x="763.05" y="66.30" width="0.8" height="1.7" fill="#7c7c7c"/><rect x="764.93" y="66.30" width="0.8" height="1.7" fill="#7c7c7c"/><rect x="766.80" y="64.40" width="0.8" height="3.6" fill="#7c7c7c"/><rect x="768.68" y="66.30" width="0.8" height="1.7" fill="#7c7c7c"/><rect x="770.55" y="66.30" width="0.8" height="1.7" fill="#7c7c7c"/><rect x="772.43" y="66.30" width="0.8" height="1.7" fill="#7c7c7c"/><rect x="774.30" y="65.40" width="0.8" height="2.6" fill="#7c7c7c"/><rect x="776.18" y="66.30" width="0.8" height="1.7" fill="#7c7c7c"/><rect x="778.05" y="66.30" width="0.8" height="1.7" fill="#7c7c7c"/><rect x="779.93" y="66.30" width="0.8" height="1.7" fill="#7c7c7c"/><rect x="781.70" y="58" width="0.9" height="10" fill="#6c6c6c"/><rect x="783.68" y="66.30" width="0.8" height="1.7" fill="#7c7c7c"/><rect x="785.55" y="66.30" width="0.8" height="1.7" fill="#7c7c7c"/><rect x="787.43" y="66.30" width="0.8" height="1.7" fill="#7c7c7c"/><rect x="789.30" y="65.40" width="0.8" height="2.6" fill="#7c7c7c"/><rect x="791.18" y="66.30" width="0.8" height="1.7" fill="#7c7c7c"/><rect x="793.05" y="66.30" width="0.8" height="1.7" fill="#7c7c7c"/><rect x="794.93" y="66.30" width="0.8" height="1.7" fill="#7c7c7c"/><rect x="796.80" y="64.40" width="0.8" height="3.6" fill="#7c7c7c"/><rect x="798.68" y="66.30" width="0.8" height="1.7" fill="#7c7c7c"/><rect x="800.55" y="66.30" width="0.8" height="1.7" fill="#7c7c7c"/><rect x="802.43" y="66.30" width="0.8" height="1.7" fill="#7c7c7c"/><rect x="804.30" y="65.40" width="0.8" height="2.6" fill="#7c7c7c"/><rect x="806.18" y="66.30" width="0.8" height="1.7" fill="#7c7c7c"/><rect x="808.05" y="66.30" width="0.8" height="1.7" fill="#7c7c7c"/><rect x="809.93" y="66.30" width="0.8" height="1.7" fill="#7c7c7c"/><rect x="811.70" y="58" width="0.9" height="10" fill="#6c6c6c"/><rect x="813.68" y="66.30" width="0.8" height="1.7" fill="#7c7c7c"/><rect x="815.55" y="66.30" width="0.8" height="1.7" fill="#7c7c7c"/><rect x="817.43" y="66.30" width="0.8" height="1.7" fill="#7c7c7c"/><rect x="819.30" y="65.40" width="0.8" height="2.6" fill="#7c7c7c"/><rect x="821.18" y="66.30" width="0.8" height="1.7" fill="#7c7c7c"/><rect x="823.05" y="66.30" width="0.8" height="1.7" fill="#7c7c7c"/><rect x="824.93" y="66.30" width="0.8" height="1.7" fill="#7c7c7c"/><rect x="826.80" y="64.40" width="0.8" height="3.6" fill="#7c7c7c"/><rect x="828.68" y="66.30" width="0.8" height="1.7" fill="#7c7c7c"/><rect x="830.55" y="66.30" width="0.8" height="1.7" fill="#7c7c7c"/><rect x="832.43" y="66.30" width="0.8" height="1.7" fill="#7c7c7c"/><rect x="834.30" y="65.40" width="0.8" height="2.6" fill="#7c7c7c"/><rect x="836.18" y="66.30" width="0.8" height="1.7" fill="#7c7c7c"/><rect x="838.05" y="66.30" width="0.8" height="1.7" fill="#7c7c7c"/><rect x="839.93" y="66.30" width="0.8" height="1.7" fill="#7c7c7c"/><rect x="841.70" y="58" width="0.9" height="10" fill="#6c6c6c"/><rect x="843.68" y="66.30" width="0.8" height="1.7" fill="#7c7c7c"/><rect x="845.55" y="66.30" width="0.8" height="1.7" fill="#7c7c7c"/><rect x="847.43" y="66.30" width="0.8" height="1.7" fill="#7c7c7c"/><rect x="849.30" y="65.40" width="0.8" height="2.6" fill="#7c7c7c"/><rect x="851.18" y="66.30" width="0.8" height="1.7" fill="#7c7c7c"/><rect x="853.05" y="66.30" width="0.8" height="1.7" fill="#7c7c7c"/><rect x="854.93" y="66.30" width="0.8" height="1.7" fill="#7c7c7c"/><rect x="856.80" y="64.40" width="0.8" height="3.6" fill="#7c7c7c"/></svg>
<span style="left:36.8px;top:57.70px;font-size:6.2px;line-height:12px;color:#b4b4b4;">3</span>
<span style="left:63.79999999999999px;top:57.70px;font-size:6.2px;line-height:12px;color:#b4b4b4;">12</span>
<span style="left:93.79999999999998px;top:57.70px;font-size:6.2px;line-height:12px;color:#b4b4b4;">11</span>
<span style="left:123.79999999999998px;top:57.70px;font-size:6.2px;line-height:12px;color:#b4b4b4;">10</span>
<span style="left:153.79999999999998px;top:57.70px;font-size:6.2px;line-height:12px;color:#b4b4b4;">9</span>
<span style="left:183.79999999999998px;top:57.70px;font-size:6.2px;line-height:12px;color:#b4b4b4;">8</span>
<span style="left:213.79999999999998px;top:57.70px;font-size:6.2px;line-height:12px;color:#b4b4b4;">7</span>
<span style="left:243.79999999999998px;top:57.70px;font-size:6.2px;line-height:12px;color:#b4b4b4;">6</span>
<span style="left:273.8px;top:57.70px;font-size:6.2px;line-height:12px;color:#b4b4b4;">5</span>
<span style="left:303.8px;top:57.70px;font-size:6.2px;line-height:12px;color:#b4b4b4;">4</span>
<span style="left:333.8px;top:57.70px;font-size:6.2px;line-height:12px;color:#b4b4b4;">3</span>
<span style="left:363.8px;top:57.70px;font-size:6.2px;line-height:12px;color:#b4b4b4;">2</span>
<span style="left:393.8px;top:57.70px;font-size:6.2px;line-height:12px;color:#b4b4b4;">1</span>
<span style="left:423.8px;top:57.70px;font-size:6.2px;line-height:12px;color:#b4b4b4;">0</span>
<span style="left:453.8px;top:57.70px;font-size:6.2px;line-height:12px;color:#b4b4b4;">1</span>
<span style="left:483.8px;top:57.70px;font-size:6.2px;line-height:12px;color:#b4b4b4;">2</span>
<span style="left:513.8000000000001px;top:57.70px;font-size:6.2px;line-height:12px;color:#b4b4b4;">3</span>
<span style="left:543.8000000000001px;top:57.70px;font-size:6.2px;line-height:12px;color:#b4b4b4;">4</span>
<span style="left:573.8000000000001px;top:57.70px;font-size:6.2px;line-height:12px;color:#b4b4b4;">5</span>
<span style="left:603.8000000000001px;top:57.70px;font-size:6.2px;line-height:12px;color:#b4b4b4;">6</span>
<span style="left:633.8000000000001px;top:57.70px;font-size:6.2px;line-height:12px;color:#b4b4b4;">7</span>
<span style="left:663.8000000000001px;top:57.70px;font-size:6.2px;line-height:12px;color:#b4b4b4;">8</span>
<span style="left:693.8000000000001px;top:57.70px;font-size:6.2px;line-height:12px;color:#b4b4b4;">9</span>
<span style="left:723.8000000000001px;top:57.70px;font-size:6.2px;line-height:12px;color:#b4b4b4;">10</span>
<span style="left:753.8000000000001px;top:57.70px;font-size:6.2px;line-height:12px;color:#b4b4b4;">11</span>
<span style="left:783.8000000000001px;top:57.70px;font-size:6.2px;line-height:12px;color:#b4b4b4;">12</span>
<span style="left:813.8000000000001px;top:57.70px;font-size:6.2px;line-height:12px;color:#b4b4b4;">13</span>
<span style="left:843.8000000000001px;top:57.70px;font-size:6.2px;line-height:12px;color:#b4b4b4;">14</span>
<span style="left:26.4px;top:87.60px;font-size:6.2px;line-height:12px;color:#a6a6a6;">8</span>
<span style="left:26.4px;top:117.60px;font-size:6.2px;line-height:12px;color:#a6a6a6;">7</span>
<span style="left:26.4px;top:147.60px;font-size:6.2px;line-height:12px;color:#a6a6a6;">6</span>
<span style="left:26.4px;top:177.60px;font-size:6.2px;line-height:12px;color:#a6a6a6;">5</span>
<span style="left:26.4px;top:207.60px;font-size:6.2px;line-height:12px;color:#a6a6a6;">4</span>
<span style="left:26.4px;top:237.60px;font-size:6.2px;line-height:12px;color:#a6a6a6;">3</span>
<span style="left:26.4px;top:267.60px;font-size:6.2px;line-height:12px;color:#a6a6a6;">2</span>
<span style="left:26.4px;top:297.60px;font-size:6.2px;line-height:12px;color:#a6a6a6;">1</span>
<span style="left:26.4px;top:327.60px;font-size:6.2px;line-height:12px;color:#a6a6a6;">0</span>
<span style="left:26.4px;top:357.60px;font-size:6.2px;line-height:12px;color:#a6a6a6;">1</span>
<span style="left:26.4px;top:387.60px;font-size:6.2px;line-height:12px;color:#a6a6a6;">2</span>
<span style="left:26.4px;top:417.60px;font-size:6.2px;line-height:12px;color:#a6a6a6;">3</span>
<span style="left:26.4px;top:447.60px;font-size:6.2px;line-height:12px;color:#a6a6a6;">4</span>
<span style="left:26.4px;top:477.60px;font-size:6.2px;line-height:12px;color:#a6a6a6;">5</span>
<span style="left:26.4px;top:507.60px;font-size:6.2px;line-height:12px;color:#a6a6a6;">6</span>
<span style="left:26.4px;top:537.60px;font-size:6.2px;line-height:12px;color:#a6a6a6;">7</span>
<span style="left:26.4px;top:567.60px;font-size:6.2px;line-height:12px;color:#a6a6a6;">8</span>
<span style="left:26.4px;top:597.60px;font-size:6.2px;line-height:12px;color:#a6a6a6;">9</span>
<span style="left:26.4px;top:627.60px;font-size:6.2px;line-height:12px;color:#a6a6a6;">1</span>
<div style="left:25.200px;top:634.10px;width:10px;height:4.90px;overflow:hidden"><span style="left:1.200px;top:-1.100px;font-size:6.200px;line-height:12px;color:#b4b4b4">0</span></div>
<div style="left:35.2px;top:68px;width:0.8px;height:571px;background:#6a6a6a;"></div>
<svg style="left:0px;top:0px;" width="40" height="655" viewBox="0 0 40 655"><rect x="34.30" y="69.05" width="1.7" height="0.8" fill="#7c7c7c"/><rect x="34.30" y="70.92" width="1.7" height="0.8" fill="#7c7c7c"/><rect x="32.40" y="72.80" width="3.6" height="0.8" fill="#7c7c7c"/><rect x="34.30" y="74.67" width="1.7" height="0.8" fill="#7c7c7c"/><rect x="34.30" y="76.55" width="1.7" height="0.8" fill="#7c7c7c"/><rect x="34.30" y="78.42" width="1.7" height="0.8" fill="#7c7c7c"/><rect x="33.40" y="80.30" width="2.6" height="0.8" fill="#7c7c7c"/><rect x="34.30" y="82.17" width="1.7" height="0.8" fill="#7c7c7c"/><rect x="34.30" y="84.05" width="1.7" height="0.8" fill="#7c7c7c"/><rect x="34.30" y="85.92" width="1.7" height="0.8" fill="#7c7c7c"/><rect x="25.5" y="87.70" width="10.5" height="0.9" fill="#5e5e5e"/><rect x="34.30" y="89.67" width="1.7" height="0.8" fill="#7c7c7c"/><rect x="34.30" y="91.55" width="1.7" height="0.8" fill="#7c7c7c"/><rect x="34.30" y="93.42" width="1.7" height="0.8" fill="#7c7c7c"/><rect x="33.40" y="95.30" width="2.6" height="0.8" fill="#7c7c7c"/><rect x="34.30" y="97.17" width="1.7" height="0.8" fill="#7c7c7c"/><rect x="34.30" y="99.05" width="1.7" height="0.8" fill="#7c7c7c"/><rect x="34.30" y="100.92" width="1.7" height="0.8" fill="#7c7c7c"/><rect x="32.40" y="102.80" width="3.6" height="0.8" fill="#7c7c7c"/><rect x="34.30" y="104.67" width="1.7" height="0.8" fill="#7c7c7c"/><rect x="34.30" y="106.55" width="1.7" height="0.8" fill="#7c7c7c"/><rect x="34.30" y="108.42" width="1.7" height="0.8" fill="#7c7c7c"/><rect x="33.40" y="110.30" width="2.6" height="0.8" fill="#7c7c7c"/><rect x="34.30" y="112.17" width="1.7" height="0.8" fill="#7c7c7c"/><rect x="34.30" y="114.05" width="1.7" height="0.8" fill="#7c7c7c"/><rect x="34.30" y="115.92" width="1.7" height="0.8" fill="#7c7c7c"/><rect x="25.5" y="117.70" width="10.5" height="0.9" fill="#5e5e5e"/><rect x="34.30" y="119.67" width="1.7" height="0.8" fill="#7c7c7c"/><rect x="34.30" y="121.55" width="1.7" height="0.8" fill="#7c7c7c"/><rect x="34.30" y="123.42" width="1.7" height="0.8" fill="#7c7c7c"/><rect x="33.40" y="125.30" width="2.6" height="0.8" fill="#7c7c7c"/><rect x="34.30" y="127.17" width="1.7" height="0.8" fill="#7c7c7c"/><rect x="34.30" y="129.05" width="1.7" height="0.8" fill="#7c7c7c"/><rect x="34.30" y="130.92" width="1.7" height="0.8" fill="#7c7c7c"/><rect x="32.40" y="132.80" width="3.6" height="0.8" fill="#7c7c7c"/><rect x="34.30" y="134.67" width="1.7" height="0.8" fill="#7c7c7c"/><rect x="34.30" y="136.55" width="1.7" height="0.8" fill="#7c7c7c"/><rect x="34.30" y="138.42" width="1.7" height="0.8" fill="#7c7c7c"/><rect x="33.40" y="140.30" width="2.6" height="0.8" fill="#7c7c7c"/><rect x="34.30" y="142.17" width="1.7" height="0.8" fill="#7c7c7c"/><rect x="34.30" y="144.05" width="1.7" height="0.8" fill="#7c7c7c"/><rect x="34.30" y="145.92" width="1.7" height="0.8" fill="#7c7c7c"/><rect x="25.5" y="147.70" width="10.5" height="0.9" fill="#5e5e5e"/><rect x="34.30" y="149.67" width="1.7" height="0.8" fill="#7c7c7c"/><rect x="34.30" y="151.55" width="1.7" height="0.8" fill="#7c7c7c"/><rect x="34.30" y="153.42" width="1.7" height="0.8" fill="#7c7c7c"/><rect x="33.40" y="155.30" width="2.6" height="0.8" fill="#7c7c7c"/><rect x="34.30" y="157.17" width="1.7" height="0.8" fill="#7c7c7c"/><rect x="34.30" y="159.05" width="1.7" height="0.8" fill="#7c7c7c"/><rect x="34.30" y="160.92" width="1.7" height="0.8" fill="#7c7c7c"/><rect x="32.40" y="162.80" width="3.6" height="0.8" fill="#7c7c7c"/><rect x="34.30" y="164.67" width="1.7" height="0.8" fill="#7c7c7c"/><rect x="34.30" y="166.55" width="1.7" height="0.8" fill="#7c7c7c"/><rect x="34.30" y="168.42" width="1.7" height="0.8" fill="#7c7c7c"/><rect x="33.40" y="170.30" width="2.6" height="0.8" fill="#7c7c7c"/><rect x="34.30" y="172.17" width="1.7" height="0.8" fill="#7c7c7c"/><rect x="34.30" y="174.05" width="1.7" height="0.8" fill="#7c7c7c"/><rect x="34.30" y="175.92" width="1.7" height="0.8" fill="#7c7c7c"/><rect x="25.5" y="177.70" width="10.5" height="0.9" fill="#5e5e5e"/><rect x="34.30" y="179.67" width="1.7" height="0.8" fill="#7c7c7c"/><rect x="34.30" y="181.55" width="1.7" height="0.8" fill="#7c7c7c"/><rect x="34.30" y="183.42" width="1.7" height="0.8" fill="#7c7c7c"/><rect x="33.40" y="185.30" width="2.6" height="0.8" fill="#7c7c7c"/><rect x="34.30" y="187.17" width="1.7" height="0.8" fill="#7c7c7c"/><rect x="34.30" y="189.05" width="1.7" height="0.8" fill="#7c7c7c"/><rect x="34.30" y="190.92" width="1.7" height="0.8" fill="#7c7c7c"/><rect x="32.40" y="192.80" width="3.6" height="0.8" fill="#7c7c7c"/><rect x="34.30" y="194.67" width="1.7" height="0.8" fill="#7c7c7c"/><rect x="34.30" y="196.55" width="1.7" height="0.8" fill="#7c7c7c"/><rect x="34.30" y="198.42" width="1.7" height="0.8" fill="#7c7c7c"/><rect x="33.40" y="200.30" width="2.6" height="0.8" fill="#7c7c7c"/><rect x="34.30" y="202.17" width="1.7" height="0.8" fill="#7c7c7c"/><rect x="34.30" y="204.05" width="1.7" height="0.8" fill="#7c7c7c"/><rect x="34.30" y="205.92" width="1.7" height="0.8" fill="#7c7c7c"/><rect x="25.5" y="207.70" width="10.5" height="0.9" fill="#5e5e5e"/><rect x="34.30" y="209.67" width="1.7" height="0.8" fill="#7c7c7c"/><rect x="34.30" y="211.55" width="1.7" height="0.8" fill="#7c7c7c"/><rect x="34.30" y="213.42" width="1.7" height="0.8" fill="#7c7c7c"/><rect x="33.40" y="215.30" width="2.6" height="0.8" fill="#7c7c7c"/><rect x="34.30" y="217.17" width="1.7" height="0.8" fill="#7c7c7c"/><rect x="34.30" y="219.05" width="1.7" height="0.8" fill="#7c7c7c"/><rect x="34.30" y="220.92" width="1.7" height="0.8" fill="#7c7c7c"/><rect x="32.40" y="222.80" width="3.6" height="0.8" fill="#7c7c7c"/><rect x="34.30" y="224.67" width="1.7" height="0.8" fill="#7c7c7c"/><rect x="34.30" y="226.55" width="1.7" height="0.8" fill="#7c7c7c"/><rect x="34.30" y="228.42" width="1.7" height="0.8" fill="#7c7c7c"/><rect x="33.40" y="230.30" width="2.6" height="0.8" fill="#7c7c7c"/><rect x="34.30" y="232.17" width="1.7" height="0.8" fill="#7c7c7c"/><rect x="34.30" y="234.05" width="1.7" height="0.8" fill="#7c7c7c"/><rect x="34.30" y="235.92" width="1.7" height="0.8" fill="#7c7c7c"/><rect x="25.5" y="237.70" width="10.5" height="0.9" fill="#5e5e5e"/><rect x="34.30" y="239.67" width="1.7" height="0.8" fill="#7c7c7c"/><rect x="34.30" y="241.55" width="1.7" height="0.8" fill="#7c7c7c"/><rect x="34.30" y="243.42" width="1.7" height="0.8" fill="#7c7c7c"/><rect x="33.40" y="245.30" width="2.6" height="0.8" fill="#7c7c7c"/><rect x="34.30" y="247.17" width="1.7" height="0.8" fill="#7c7c7c"/><rect x="34.30" y="249.05" width="1.7" height="0.8" fill="#7c7c7c"/><rect x="34.30" y="250.92" width="1.7" height="0.8" fill="#7c7c7c"/><rect x="32.40" y="252.80" width="3.6" height="0.8" fill="#7c7c7c"/><rect x="34.30" y="254.67" width="1.7" height="0.8" fill="#7c7c7c"/><rect x="34.30" y="256.55" width="1.7" height="0.8" fill="#7c7c7c"/><rect x="34.30" y="258.43" width="1.7" height="0.8" fill="#7c7c7c"/><rect x="33.40" y="260.30" width="2.6" height="0.8" fill="#7c7c7c"/><rect x="34.30" y="262.18" width="1.7" height="0.8" fill="#7c7c7c"/><rect x="34.30" y="264.05" width="1.7" height="0.8" fill="#7c7c7c"/><rect x="34.30" y="265.93" width="1.7" height="0.8" fill="#7c7c7c"/><rect x="25.5" y="267.70" width="10.5" height="0.9" fill="#5e5e5e"/><rect x="34.30" y="269.68" width="1.7" height="0.8" fill="#7c7c7c"/><rect x="34.30" y="271.55" width="1.7" height="0.8" fill="#7c7c7c"/><rect x="34.30" y="273.43" width="1.7" height="0.8" fill="#7c7c7c"/><rect x="33.40" y="275.30" width="2.6" height="0.8" fill="#7c7c7c"/><rect x="34.30" y="277.18" width="1.7" height="0.8" fill="#7c7c7c"/><rect x="34.30" y="279.05" width="1.7" height="0.8" fill="#7c7c7c"/><rect x="34.30" y="280.93" width="1.7" height="0.8" fill="#7c7c7c"/><rect x="32.40" y="282.80" width="3.6" height="0.8" fill="#7c7c7c"/><rect x="34.30" y="284.68" width="1.7" height="0.8" fill="#7c7c7c"/><rect x="34.30" y="286.55" width="1.7" height="0.8" fill="#7c7c7c"/><rect x="34.30" y="288.43" width="1.7" height="0.8" fill="#7c7c7c"/><rect x="33.40" y="290.30" width="2.6" height="0.8" fill="#7c7c7c"/><rect x="34.30" y="292.18" width="1.7" height="0.8" fill="#7c7c7c"/><rect x="34.30" y="294.05" width="1.7" height="0.8" fill="#7c7c7c"/><rect x="34.30" y="295.93" width="1.7" height="0.8" fill="#7c7c7c"/><rect x="25.5" y="297.70" width="10.5" height="0.9" fill="#5e5e5e"/><rect x="34.30" y="299.68" width="1.7" height="0.8" fill="#7c7c7c"/><rect x="34.30" y="301.55" width="1.7" height="0.8" fill="#7c7c7c"/><rect x="34.30" y="303.43" width="1.7" height="0.8" fill="#7c7c7c"/><rect x="33.40" y="305.30" width="2.6" height="0.8" fill="#7c7c7c"/><rect x="34.30" y="307.18" width="1.7" height="0.8" fill="#7c7c7c"/><rect x="34.30" y="309.05" width="1.7" height="0.8" fill="#7c7c7c"/><rect x="34.30" y="310.93" width="1.7" height="0.8" fill="#7c7c7c"/><rect x="32.40" y="312.80" width="3.6" height="0.8" fill="#7c7c7c"/><rect x="34.30" y="314.68" width="1.7" height="0.8" fill="#7c7c7c"/><rect x="34.30" y="316.55" width="1.7" height="0.8" fill="#7c7c7c"/><rect x="34.30" y="318.43" width="1.7" height="0.8" fill="#7c7c7c"/><rect x="33.40" y="320.30" width="2.6" height="0.8" fill="#7c7c7c"/><rect x="34.30" y="322.18" width="1.7" height="0.8" fill="#7c7c7c"/><rect x="34.30" y="324.05" width="1.7" height="0.8" fill="#7c7c7c"/><rect x="34.30" y="325.93" width="1.7" height="0.8" fill="#7c7c7c"/><rect x="25.5" y="327.70" width="10.5" height="0.9" fill="#5e5e5e"/><rect x="34.30" y="329.68" width="1.7" height="0.8" fill="#7c7c7c"/><rect x="34.30" y="331.55" width="1.7" height="0.8" fill="#7c7c7c"/><rect x="34.30" y="333.43" width="1.7" height="0.8" fill="#7c7c7c"/><rect x="33.40" y="335.30" width="2.6" height="0.8" fill="#7c7c7c"/><rect x="34.30" y="337.18" width="1.7" height="0.8" fill="#7c7c7c"/><rect x="34.30" y="339.05" width="1.7" height="0.8" fill="#7c7c7c"/><rect x="34.30" y="340.93" width="1.7" height="0.8" fill="#7c7c7c"/><rect x="32.40" y="342.80" width="3.6" height="0.8" fill="#7c7c7c"/><rect x="34.30" y="344.68" width="1.7" height="0.8" fill="#7c7c7c"/><rect x="34.30" y="346.55" width="1.7" height="0.8" fill="#7c7c7c"/><rect x="34.30" y="348.43" width="1.7" height="0.8" fill="#7c7c7c"/><rect x="33.40" y="350.30" width="2.6" height="0.8" fill="#7c7c7c"/><rect x="34.30" y="352.18" width="1.7" height="0.8" fill="#7c7c7c"/><rect x="34.30" y="354.05" width="1.7" height="0.8" fill="#7c7c7c"/><rect x="34.30" y="355.93" width="1.7" height="0.8" fill="#7c7c7c"/><rect x="25.5" y="357.70" width="10.5" height="0.9" fill="#5e5e5e"/><rect x="34.30" y="359.68" width="1.7" height="0.8" fill="#7c7c7c"/><rect x="34.30" y="361.55" width="1.7" height="0.8" fill="#7c7c7c"/><rect x="34.30" y="363.43" width="1.7" height="0.8" fill="#7c7c7c"/><rect x="33.40" y="365.30" width="2.6" height="0.8" fill="#7c7c7c"/><rect x="34.30" y="367.18" width="1.7" height="0.8" fill="#7c7c7c"/><rect x="34.30" y="369.05" width="1.7" height="0.8" fill="#7c7c7c"/><rect x="34.30" y="370.93" width="1.7" height="0.8" fill="#7c7c7c"/><rect x="32.40" y="372.80" width="3.6" height="0.8" fill="#7c7c7c"/><rect x="34.30" y="374.68" width="1.7" height="0.8" fill="#7c7c7c"/><rect x="34.30" y="376.55" width="1.7" height="0.8" fill="#7c7c7c"/><rect x="34.30" y="378.43" width="1.7" height="0.8" fill="#7c7c7c"/><rect x="33.40" y="380.30" width="2.6" height="0.8" fill="#7c7c7c"/><rect x="34.30" y="382.18" width="1.7" height="0.8" fill="#7c7c7c"/><rect x="34.30" y="384.05" width="1.7" height="0.8" fill="#7c7c7c"/><rect x="34.30" y="385.93" width="1.7" height="0.8" fill="#7c7c7c"/><rect x="25.5" y="387.70" width="10.5" height="0.9" fill="#5e5e5e"/><rect x="34.30" y="389.68" width="1.7" height="0.8" fill="#7c7c7c"/><rect x="34.30" y="391.55" width="1.7" height="0.8" fill="#7c7c7c"/><rect x="34.30" y="393.43" width="1.7" height="0.8" fill="#7c7c7c"/><rect x="33.40" y="395.30" width="2.6" height="0.8" fill="#7c7c7c"/><rect x="34.30" y="397.18" width="1.7" height="0.8" fill="#7c7c7c"/><rect x="34.30" y="399.05" width="1.7" height="0.8" fill="#7c7c7c"/><rect x="34.30" y="400.93" width="1.7" height="0.8" fill="#7c7c7c"/><rect x="32.40" y="402.80" width="3.6" height="0.8" fill="#7c7c7c"/><rect x="34.30" y="404.68" width="1.7" height="0.8" fill="#7c7c7c"/><rect x="34.30" y="406.55" width="1.7" height="0.8" fill="#7c7c7c"/><rect x="34.30" y="408.43" width="1.7" height="0.8" fill="#7c7c7c"/><rect x="33.40" y="410.30" width="2.6" height="0.8" fill="#7c7c7c"/><rect x="34.30" y="412.18" width="1.7" height="0.8" fill="#7c7c7c"/><rect x="34.30" y="414.05" width="1.7" height="0.8" fill="#7c7c7c"/><rect x="34.30" y="415.93" width="1.7" height="0.8" fill="#7c7c7c"/><rect x="25.5" y="417.70" width="10.5" height="0.9" fill="#5e5e5e"/><rect x="34.30" y="419.68" width="1.7" height="0.8" fill="#7c7c7c"/><rect x="34.30" y="421.55" width="1.7" height="0.8" fill="#7c7c7c"/><rect x="34.30" y="423.43" width="1.7" height="0.8" fill="#7c7c7c"/><rect x="33.40" y="425.30" width="2.6" height="0.8" fill="#7c7c7c"/><rect x="34.30" y="427.18" width="1.7" height="0.8" fill="#7c7c7c"/><rect x="34.30" y="429.05" width="1.7" height="0.8" fill="#7c7c7c"/><rect x="34.30" y="430.93" width="1.7" height="0.8" fill="#7c7c7c"/><rect x="32.40" y="432.80" width="3.6" height="0.8" fill="#7c7c7c"/><rect x="34.30" y="434.68" width="1.7" height="0.8" fill="#7c7c7c"/><rect x="34.30" y="436.55" width="1.7" height="0.8" fill="#7c7c7c"/><rect x="34.30" y="438.43" width="1.7" height="0.8" fill="#7c7c7c"/><rect x="33.40" y="440.30" width="2.6" height="0.8" fill="#7c7c7c"/><rect x="34.30" y="442.18" width="1.7" height="0.8" fill="#7c7c7c"/><rect x="34.30" y="444.05" width="1.7" height="0.8" fill="#7c7c7c"/><rect x="34.30" y="445.93" width="1.7" height="0.8" fill="#7c7c7c"/><rect x="25.5" y="447.70" width="10.5" height="0.9" fill="#5e5e5e"/><rect x="34.30" y="449.68" width="1.7" height="0.8" fill="#7c7c7c"/><rect x="34.30" y="451.55" width="1.7" height="0.8" fill="#7c7c7c"/><rect x="34.30" y="453.43" width="1.7" height="0.8" fill="#7c7c7c"/><rect x="33.40" y="455.30" width="2.6" height="0.8" fill="#7c7c7c"/><rect x="34.30" y="457.18" width="1.7" height="0.8" fill="#7c7c7c"/><rect x="34.30" y="459.05" width="1.7" height="0.8" fill="#7c7c7c"/><rect x="34.30" y="460.93" width="1.7" height="0.8" fill="#7c7c7c"/><rect x="32.40" y="462.80" width="3.6" height="0.8" fill="#7c7c7c"/><rect x="34.30" y="464.68" width="1.7" height="0.8" fill="#7c7c7c"/><rect x="34.30" y="466.55" width="1.7" height="0.8" fill="#7c7c7c"/><rect x="34.30" y="468.43" width="1.7" height="0.8" fill="#7c7c7c"/><rect x="33.40" y="470.30" width="2.6" height="0.8" fill="#7c7c7c"/><rect x="34.30" y="472.18" width="1.7" height="0.8" fill="#7c7c7c"/><rect x="34.30" y="474.05" width="1.7" height="0.8" fill="#7c7c7c"/><rect x="34.30" y="475.93" width="1.7" height="0.8" fill="#7c7c7c"/><rect x="25.5" y="477.70" width="10.5" height="0.9" fill="#5e5e5e"/><rect x="34.30" y="479.68" width="1.7" height="0.8" fill="#7c7c7c"/><rect x="34.30" y="481.55" width="1.7" height="0.8" fill="#7c7c7c"/><rect x="34.30" y="483.43" width="1.7" height="0.8" fill="#7c7c7c"/><rect x="33.40" y="485.30" width="2.6" height="0.8" fill="#7c7c7c"/><rect x="34.30" y="487.18" width="1.7" height="0.8" fill="#7c7c7c"/><rect x="34.30" y="489.05" width="1.7" height="0.8" fill="#7c7c7c"/><rect x="34.30" y="490.93" width="1.7" height="0.8" fill="#7c7c7c"/><rect x="32.40" y="492.80" width="3.6" height="0.8" fill="#7c7c7c"/><rect x="34.30" y="494.68" width="1.7" height="0.8" fill="#7c7c7c"/><rect x="34.30" y="496.55" width="1.7" height="0.8" fill="#7c7c7c"/><rect x="34.30" y="498.43" width="1.7" height="0.8" fill="#7c7c7c"/><rect x="33.40" y="500.30" width="2.6" height="0.8" fill="#7c7c7c"/><rect x="34.30" y="502.18" width="1.7" height="0.8" fill="#7c7c7c"/><rect x="34.30" y="504.05" width="1.7" height="0.8" fill="#7c7c7c"/><rect x="34.30" y="505.93" width="1.7" height="0.8" fill="#7c7c7c"/><rect x="25.5" y="507.70" width="10.5" height="0.9" fill="#5e5e5e"/><rect x="34.30" y="509.68" width="1.7" height="0.8" fill="#7c7c7c"/><rect x="34.30" y="511.55" width="1.7" height="0.8" fill="#7c7c7c"/><rect x="34.30" y="513.43" width="1.7" height="0.8" fill="#7c7c7c"/><rect x="33.40" y="515.30" width="2.6" height="0.8" fill="#7c7c7c"/><rect x="34.30" y="517.18" width="1.7" height="0.8" fill="#7c7c7c"/><rect x="34.30" y="519.05" width="1.7" height="0.8" fill="#7c7c7c"/><rect x="34.30" y="520.93" width="1.7" height="0.8" fill="#7c7c7c"/><rect x="32.40" y="522.80" width="3.6" height="0.8" fill="#7c7c7c"/><rect x="34.30" y="524.68" width="1.7" height="0.8" fill="#7c7c7c"/><rect x="34.30" y="526.55" width="1.7" height="0.8" fill="#7c7c7c"/><rect x="34.30" y="528.43" width="1.7" height="0.8" fill="#7c7c7c"/><rect x="33.40" y="530.30" width="2.6" height="0.8" fill="#7c7c7c"/><rect x="34.30" y="532.18" width="1.7" height="0.8" fill="#7c7c7c"/><rect x="34.30" y="534.05" width="1.7" height="0.8" fill="#7c7c7c"/><rect x="34.30" y="535.93" width="1.7" height="0.8" fill="#7c7c7c"/><rect x="25.5" y="537.70" width="10.5" height="0.9" fill="#5e5e5e"/><rect x="34.30" y="539.68" width="1.7" height="0.8" fill="#7c7c7c"/><rect x="34.30" y="541.55" width="1.7" height="0.8" fill="#7c7c7c"/><rect x="34.30" y="543.43" width="1.7" height="0.8" fill="#7c7c7c"/><rect x="33.40" y="545.30" width="2.6" height="0.8" fill="#7c7c7c"/><rect x="34.30" y="547.18" width="1.7" height="0.8" fill="#7c7c7c"/><rect x="34.30" y="549.05" width="1.7" height="0.8" fill="#7c7c7c"/><rect x="34.30" y="550.93" width="1.7" height="0.8" fill="#7c7c7c"/><rect x="32.40" y="552.80" width="3.6" height="0.8" fill="#7c7c7c"/><rect x="34.30" y="554.68" width="1.7" height="0.8" fill="#7c7c7c"/><rect x="34.30" y="556.55" width="1.7" height="0.8" fill="#7c7c7c"/><rect x="34.30" y="558.43" width="1.7" height="0.8" fill="#7c7c7c"/><rect x="33.40" y="560.30" width="2.6" height="0.8" fill="#7c7c7c"/><rect x="34.30" y="562.18" width="1.7" height="0.8" fill="#7c7c7c"/><rect x="34.30" y="564.05" width="1.7" height="0.8" fill="#7c7c7c"/><rect x="34.30" y="565.93" width="1.7" height="0.8" fill="#7c7c7c"/><rect x="25.5" y="567.70" width="10.5" height="0.9" fill="#5e5e5e"/><rect x="34.30" y="569.68" width="1.7" height="0.8" fill="#7c7c7c"/><rect x="34.30" y="571.55" width="1.7" height="0.8" fill="#7c7c7c"/><rect x="34.30" y="573.43" width="1.7" height="0.8" fill="#7c7c7c"/><rect x="33.40" y="575.30" width="2.6" height="0.8" fill="#7c7c7c"/><rect x="34.30" y="577.18" width="1.7" height="0.8" fill="#7c7c7c"/><rect x="34.30" y="579.05" width="1.7" height="0.8" fill="#7c7c7c"/><rect x="34.30" y="580.93" width="1.7" height="0.8" fill="#7c7c7c"/><rect x="32.40" y="582.80" width="3.6" height="0.8" fill="#7c7c7c"/><rect x="34.30" y="584.68" width="1.7" height="0.8" fill="#7c7c7c"/><rect x="34.30" y="586.55" width="1.7" height="0.8" fill="#7c7c7c"/><rect x="34.30" y="588.43" width="1.7" height="0.8" fill="#7c7c7c"/><rect x="33.40" y="590.30" width="2.6" height="0.8" fill="#7c7c7c"/><rect x="34.30" y="592.18" width="1.7" height="0.8" fill="#7c7c7c"/><rect x="34.30" y="594.05" width="1.7" height="0.8" fill="#7c7c7c"/><rect x="34.30" y="595.93" width="1.7" height="0.8" fill="#7c7c7c"/><rect x="25.5" y="597.70" width="10.5" height="0.9" fill="#5e5e5e"/><rect x="34.30" y="599.68" width="1.7" height="0.8" fill="#7c7c7c"/><rect x="34.30" y="601.55" width="1.7" height="0.8" fill="#7c7c7c"/><rect x="34.30" y="603.43" width="1.7" height="0.8" fill="#7c7c7c"/><rect x="33.40" y="605.30" width="2.6" height="0.8" fill="#7c7c7c"/><rect x="34.30" y="607.18" width="1.7" height="0.8" fill="#7c7c7c"/><rect x="34.30" y="609.05" width="1.7" height="0.8" fill="#7c7c7c"/><rect x="34.30" y="610.93" width="1.7" height="0.8" fill="#7c7c7c"/><rect x="32.40" y="612.80" width="3.6" height="0.8" fill="#7c7c7c"/><rect x="34.30" y="614.68" width="1.7" height="0.8" fill="#7c7c7c"/><rect x="34.30" y="616.55" width="1.7" height="0.8" fill="#7c7c7c"/><rect x="34.30" y="618.43" width="1.7" height="0.8" fill="#7c7c7c"/><rect x="33.40" y="620.30" width="2.6" height="0.8" fill="#7c7c7c"/><rect x="34.30" y="622.18" width="1.7" height="0.8" fill="#7c7c7c"/><rect x="34.30" y="624.05" width="1.7" height="0.8" fill="#7c7c7c"/><rect x="34.30" y="625.93" width="1.7" height="0.8" fill="#7c7c7c"/><rect x="25.5" y="627.70" width="10.5" height="0.9" fill="#5e5e5e"/><rect x="34.30" y="629.68" width="1.7" height="0.8" fill="#7c7c7c"/><rect x="34.30" y="631.55" width="1.7" height="0.8" fill="#7c7c7c"/><rect x="34.30" y="633.43" width="1.7" height="0.8" fill="#7c7c7c"/><rect x="33.40" y="635.30" width="2.6" height="0.8" fill="#7c7c7c"/><rect x="34.30" y="637.18" width="1.7" height="0.8" fill="#7c7c7c"/></svg>
<div style="left:857.8px;top:57.2px;width:10.6px;height:581.8px;background:#4a4a4a;"></div>
<div style="left:867.5px;top:40px;width:2.5px;height:609px;background:#3c3c3c;"></div>
<div style="left:25.2px;top:639px;width:843.2px;height:10px;background:#4a4a4a;"></div>
<div style="left:25.2px;top:639px;width:145px;height:10px;background:#535353;"></div>
<div style="left:54px;top:639px;width:1px;height:10px;background:#484848;"></div>
<span style="left:30px;top:639.80px;font-size:6.5px;line-height:12px;color:#e0e0e0;letter-spacing:-0.258px;">66,67%</span>
<span style="left:84px;top:639.80px;font-size:6.5px;line-height:12px;color:#d8d8d8;letter-spacing:-0.052px;">Док: 42,2K/56,3K</span>
<svg style="left:163.5px;top:641.5px;" width="4" height="6" viewBox="0 0 4 6"><path d="M0.7 0.5L3.2 3L0.7 5.5" fill="none" stroke="#cfcfcf" stroke-width="0.9"/></svg>
<div style="left:857.8px;top:639px;width:10.6px;height:10px;background:#4f4f4f;"></div>
<svg style="left:6.1px;top:58.6px;" width="12.8" height="12.8" viewBox="0 0 16 16"><path transform="translate(8 8) scale(0.86) translate(-8 -8)" d="M8 1.2L10.2 3.8H8.7V7.3H12.2V5.8L14.8 8L12.2 10.2V8.7H8.7V12.2H10.2L8 14.8L5.8 12.2H7.3V8.7H3.8V10.2L1.2 8L3.8 5.8V7.3H7.3V3.8H5.8z" fill="#cecece"/></svg>
<svg style="left:18.6px;top:69.4px;" width="2.1" height="2.1" viewBox="0 0 2.1 2.1"><path d="M2.100 0V2.100H0z" fill="#a8a8a8"/></svg>
<svg style="left:6.1px;top:74.89999999999999px;" width="12.8" height="12.8" viewBox="0 0 16 16"><rect x="2" y="3.2" width="12" height="9.6" fill="none" stroke="#cecece" stroke-width="1.3" stroke-dasharray="2.6 1.6"/></svg>
<svg style="left:18.6px;top:85.7px;" width="2.1" height="2.1" viewBox="0 0 2.1 2.1"><path d="M2.100 0V2.100H0z" fill="#a8a8a8"/></svg>
<svg style="left:6.1px;top:91.1px;" width="12.8" height="12.8" viewBox="0 0 16 16"><path d="M2.2 3.2L7.6 6.4L13.6 2.6L11.4 10.2L6.2 9.6L4.2 13.4" fill="none" stroke="#cecece" stroke-width="1.3" stroke-linejoin="round"/><path d="M2.2 3.2L6.2 9.6" fill="none" stroke="#cecece" stroke-width="1.3"/><path d="M3.4 13.8L9.4 8.2" fill="none" stroke="#cecece" stroke-width="0.9"/></svg>
<svg style="left:18.6px;top:101.9px;" width="2.1" height="2.1" viewBox="0 0 2.1 2.1"><path d="M2.100 0V2.100H0z" fill="#a8a8a8"/></svg>
<svg style="left:6.1px;top:106.89999999999999px;" width="12.8" height="12.8" viewBox="0 0 16 16"><path d="M2.6 13.4L9.6 6.4" fill="none" stroke="#cecece" stroke-width="2.2" stroke-linecap="round"/><path d="M11.6 1.6v2.4M10.4 2.8h2.4M13.6 5.6v2M12.6 6.6h2M8.2 2.6v1.6M7.4 3.4H9" fill="none" stroke="#cecece" stroke-width="0.9"/></svg>
<svg style="left:18.6px;top:117.7px;" width="2.1" height="2.1" viewBox="0 0 2.1 2.1"><path d="M2.100 0V2.100H0z" fill="#a8a8a8"/></svg>
<svg style="left:6.1px;top:123.19999999999999px;" width="12.8" height="12.8" viewBox="0 0 16 16"><path d="M4.6 1.2V11.4H14.8M1.2 4.6H11.4V14.8" fill="none" stroke="#cecece" stroke-width="1.5"/></svg>
<svg style="left:18.6px;top:134.0px;" width="2.1" height="2.1" viewBox="0 0 2.1 2.1"><path d="M2.100 0V2.100H0z" fill="#a8a8a8"/></svg>
<svg style="left:6.1px;top:139.6px;" width="12.8" height="12.8" viewBox="0 0 16 16"><rect x="2.4" y="2.8" width="11.2" height="10.4" fill="none" stroke="#cecece" stroke-width="1.3"/><path d="M2.4 2.8L13.6 13.2M13.6 2.8L2.4 13.2" fill="none" stroke="#cecece" stroke-width="1.1"/></svg>
<svg style="left:6.1px;top:155.79999999999998px;" width="12.8" height="12.8" viewBox="0 0 16 16"><path d="M2.2 13.8L3 11.2L8.6 5.6L10.4 7.4L4.8 13z" fill="none" stroke="#cecece" stroke-width="1.1" stroke-linejoin="round"/><path d="M8.4 4.4L11.6 7.6" fill="none" stroke="#cecece" stroke-width="1.8" stroke-linecap="round"/><path d="M10.2 5.8L13 3" fill="none" stroke="#cecece" stroke-width="2.6" stroke-linecap="round"/></svg>
<svg style="left:18.6px;top:166.6px;" width="2.1" height="2.1" viewBox="0 0 2.1 2.1"><path d="M2.100 0V2.100H0z" fill="#a8a8a8"/></svg>
<svg style="left:6.1px;top:172.0px;" width="12.8" height="12.8" viewBox="0 0 16 16"><g transform="rotate(-45 8 9)"><rect x="1.4" y="6" width="13.2" height="6" rx="2" fill="#cecece"/><rect x="6" y="7" width="4" height="4" fill="#535353"/><circle cx="7.2" cy="8.2" r="0.5" fill="#cecece"/><circle cx="8.8" cy="8.2" r="0.5" fill="#cecece"/><circle cx="7.2" cy="9.8" r="0.5" fill="#cecece"/><circle cx="8.8" cy="9.8" r="0.5" fill="#cecece"/></g><path d="M3 6.4A3.4 3.4 0 0 1 8 3" fill="none" stroke="#cecece" stroke-width="0.9" stroke-dasharray="1.2 1"/></svg>
<svg style="left:18.6px;top:182.8px;" width="2.1" height="2.1" viewBox="0 0 2.1 2.1"><path d="M2.100 0V2.100H0z" fill="#a8a8a8"/></svg>
<svg style="left:6.1px;top:188.2px;" width="12.8" height="12.8" viewBox="0 0 16 16"><path d="M13.4 1.6L7 9" fill="none" stroke="#cecece" stroke-width="2" stroke-linecap="round"/><path d="M6.8 9.2C5 8.8 3.6 10.4 3.8 12C3.6 13 2.8 13.6 2 13.8C4.4 14.8 7.4 13.6 7.8 10.6z" fill="#cecece"/></svg>
<svg style="left:18.6px;top:199.0px;" width="2.1" height="2.1" viewBox="0 0 2.1 2.1"><path d="M2.100 0V2.100H0z" fill="#a8a8a8"/></svg>
<svg style="left:6.1px;top:204.4px;" width="12.8" height="12.8" viewBox="0 0 16 16"><path d="M6 2.2h4l-0.8 5.4h3.2c0.8 0 1.2 0.6 1.2 1.2v2H2.4v-2c0-0.6 0.4-1.2 1.2-1.2h3.200z" fill="#cecece"/><circle cx="8" cy="3.4" r="2.5" fill="#cecece"/><rect x="2.4" y="12" width="11.2" height="1.6" fill="#cecece"/></svg>
<svg style="left:18.6px;top:215.20000000000002px;" width="2.1" height="2.1" viewBox="0 0 2.1 2.1"><path d="M2.100 0V2.100H0z" fill="#a8a8a8"/></svg>
<svg style="left:6.1px;top:220.6px;" width="12.8" height="12.8" viewBox="0 0 16 16"><path d="M14 1.8L8.4 8.8" fill="none" stroke="#cecece" stroke-width="1.8" stroke-linecap="round"/><path d="M8.2 9C6.6 8.6 5.400 10 5.600 11.400C5.400 12.400 4.800 12.800 4 13C6.200 14 8.800 13 9.200 10.200z" fill="#cecece"/><path d="M1.4 4.400h5.600L5.200 2.600M7 4.400L5.200 6.200" fill="none" stroke="#cecece" stroke-width="1.1"/><path d="M10.600 13.400L13.800 9.800" fill="none" stroke="#cecece" stroke-width="0.9"/></svg>
<svg style="left:18.6px;top:231.4px;" width="2.1" height="2.1" viewBox="0 0 2.1 2.1"><path d="M2.100 0V2.100H0z" fill="#a8a8a8"/></svg>
<svg style="left:6.1px;top:236.9px;" width="12.8" height="12.8" viewBox="0 0 16 16"><path d="M2 10.600L8.600 3.200L14 6.800L8.400 13.600H4.800z" fill="#cecece"/><path d="M3.400 9.400L7 13" stroke="#535353" stroke-width="1"/><path d="M2.400 14.600H12" fill="none" stroke="#cecece" stroke-width="0.9"/></svg>
<svg style="left:18.6px;top:247.70000000000002px;" width="2.1" height="2.1" viewBox="0 0 2.1 2.1"><path d="M2.100 0V2.100H0z" fill="#a8a8a8"/></svg>
<svg style="left:6.1px;top:253.20000000000002px;" width="12.8" height="12.8" viewBox="0 0 16 16"><path d="M7.200 2.800L13 8.600L7.600 13.600L2 7.800z" fill="none" stroke="#cecece" stroke-width="1.3" stroke-linejoin="round"/><path d="M7.200 2.800L4.400 0.800M4 5.800L11 6" fill="none" stroke="#cecece" stroke-width="1"/><path d="M13.800 9.800c0.800 1.200 1.200 2 1.200 2.600a1.200 1.200 0 0 1-2.400 0c0-0.600 0.400-1.400 1.200-2.600z" fill="#cecece"/></svg>
<svg style="left:18.6px;top:264.0px;" width="2.1" height="2.1" viewBox="0 0 2.1 2.1"><path d="M2.100 0V2.100H0z" fill="#a8a8a8"/></svg>
<svg style="left:6.1px;top:269.6px;" width="12.8" height="12.8" viewBox="0 0 16 16"><path d="M8 1.600C10.400 5 12.400 7.600 12.400 10a4.400 4.400 0 0 1-8.800 0C3.600 7.600 5.600 5 8 1.600z" fill="#cecece"/></svg>
<svg style="left:18.6px;top:280.4px;" width="2.1" height="2.1" viewBox="0 0 2.1 2.1"><path d="M2.100 0V2.100H0z" fill="#a8a8a8"/></svg>
<svg style="left:6.1px;top:286.0px;" width="12.8" height="12.8" viewBox="0 0 16 16"><ellipse cx="8" cy="8.200" rx="6" ry="5.400" fill="#cecece"/><path d="M4.600 6.400q1.200-1.400 2.600 0t2.600 0M4.400 9.400q1.400-1.400 2.800 0t2.800 0" fill="none" stroke="#535353" stroke-width="0.8"/></svg>
<svg style="left:18.6px;top:296.79999999999995px;" width="2.1" height="2.1" viewBox="0 0 2.1 2.1"><path d="M2.100 0V2.100H0z" fill="#a8a8a8"/></svg>
<svg style="left:6.1px;top:302.40000000000003px;" width="12.8" height="12.8" viewBox="0 0 16 16"><path d="M2 14L3.400 8L9.200 3.400L12.800 7L8.200 12.800z" fill="none" stroke="#cecece" stroke-width="1.200" stroke-linejoin="round"/><path d="M2 14L6.600 9.400" fill="none" stroke="#cecece" stroke-width="0.9"/><circle cx="7.200" cy="8.800" r="1.100" fill="#cecece"/><path d="M9.800 2.600L13.600 6.400" fill="none" stroke="#cecece" stroke-width="1.600"/></svg>
<svg style="left:18.6px;top:313.2px;" width="2.1" height="2.1" viewBox="0 0 2.1 2.1"><path d="M2.100 0V2.100H0z" fill="#a8a8a8"/></svg>
<span style="left:8.300px;top:317.800px;font-family:'Liberation Serif',serif;font-weight:bold;font-size:12.600px;line-height:17px;color:#d6d6d6">T</span>
<svg style="left:18.6px;top:329.8px;" width="2.4" height="2.4" viewBox="0 0 2.4 2.4"><path d="M2.400 0V2.400H0z" fill="#bdbdbd"/></svg>
<svg style="left:6.1px;top:335.1px;" width="12.8" height="12.8" viewBox="0 0 16 16"><path d="M5 1.800V12.600L7.600 10.200L9.400 14.400L11 13.600L9.200 9.600H12.600z" fill="#141414" stroke="#e2e2e2" stroke-width="1.300" stroke-linejoin="round"/></svg>
<svg style="left:18.6px;top:345.9px;" width="2.1" height="2.1" viewBox="0 0 2.1 2.1"><path d="M2.100 0V2.100H0z" fill="#a8a8a8"/></svg>
<svg style="left:6.1px;top:351.20000000000005px;" width="12.8" height="12.8" viewBox="0 0 16 16"><rect x="1.800" y="3" width="12.400" height="9.600" fill="#6e6e6e" stroke="#cecece" stroke-width="1.200"/></svg>
<svg style="left:18.6px;top:362.0px;" width="2.1" height="2.1" viewBox="0 0 2.1 2.1"><path d="M2.100 0V2.100H0z" fill="#a8a8a8"/></svg>
<svg style="left:6.1px;top:367.40000000000003px;" width="12.8" height="12.8" viewBox="0 0 16 16"><g stroke="#dedede" stroke-linecap="round" fill="none"><path d="M5.600 7.400L4.800 3" stroke-width="1.700"/><path d="M7.700 6.800L7.500 1.800" stroke-width="1.700"/><path d="M9.800 7L10.200 2.400" stroke-width="1.700"/><path d="M11.700 8L12.600 4.400" stroke-width="1.600"/><path d="M4.600 11.200L2 8.600" stroke-width="1.900"/></g><path d="M4.600 6.800L12.500 7.400C12.700 10.400 11.800 12.600 10.800 14.600H5.600C4.600 13 3.600 11.600 3.400 9.600z" fill="#dedede"/></svg>
<svg style="left:18.6px;top:378.2px;" width="2.1" height="2.1" viewBox="0 0 2.1 2.1"><path d="M2.100 0V2.100H0z" fill="#a8a8a8"/></svg>
<div style="left:2.8px;top:382.6px;width:18.8px;height:14.6px;background:#2f2f2f;border-radius:1px"></div>
<svg style="left:6.1px;top:383.6px;" width="12.8" height="12.8" viewBox="0 0 16 16"><circle cx="6.400" cy="6.400" r="4.500" fill="none" stroke="#e6e6e6" stroke-width="1.200"/><path d="M9.900 9.900L14 14" stroke="#e6e6e6" stroke-width="2.100" stroke-linecap="round"/></svg>
<svg style="left:6.1px;top:399.6px;" width="12.8" height="12.8" viewBox="0 0 16 16"><circle cx="3.400" cy="8" r="1.700" fill="#e6e6e6"/><circle cx="8" cy="8" r="1.700" fill="#e6e6e6"/><circle cx="12.600" cy="8" r="1.700" fill="#e6e6e6"/></svg>
<svg style="left:18.6px;top:410.4px;" width="2.1" height="2.1" viewBox="0 0 2.1 2.1"><path d="M2.100 0V2.100H0z" fill="#a8a8a8"/></svg>
<div style="left:3.2px;top:418.6px;width:4px;height:4px;background:#101010;border:0.8px solid #e6e6e6;box-sizing:border-box"></div>
<div style="left:5.6px;top:421px;width:4px;height:4px;background:#f0f0f0;"></div>
<div style="left:3.8px;top:419.2px;width:3.2px;height:3.2px;background:#0a0a0a;outline:0.7px solid #e0e0e0"></div>
<svg style="left:14px;top:418px;" width="7" height="7" viewBox="0 0 7 7"><path d="M1 2.400H4.600V6" fill="none" stroke="#d8d8d8" stroke-width="1"/><path d="M0 2.400L2 0.800V4zM4.600 7L3 5h3.200z" fill="#d8d8d8"/></svg>
<div style="left:9px;top:434.3px;width:12px;height:11.6px;background:#ffffff;border:1px solid #3a3a3a;box-sizing:border-box"></div>
<div style="left:3px;top:428.2px;width:11.6px;height:11.2px;background:#f0a000;border:0.8px solid #e8e0d0;box-sizing:border-box;box-shadow:0 0 0 0.6px #3a3a3a"></div>
<svg style="left:6.5px;top:452.6px;" width="12" height="9" viewBox="0 0 12 9"><rect x="0.500" y="0.500" width="11" height="8" fill="none" stroke="#cecece" stroke-width="1"/><circle cx="6" cy="4.500" r="2.300" fill="none" stroke="#9a9a9a" stroke-width="0.800" stroke-dasharray="1 0.800"/></svg>
<svg style="left:6.5px;top:468.8px;" width="12" height="10" viewBox="0 0 12 10"><rect x="3" y="0.500" width="8.500" height="6" fill="none" stroke="#cecece" stroke-width="1"/><rect x="0.500" y="3" width="8.500" height="6" fill="#535353" stroke="#cecece" stroke-width="1"/></svg>
<svg style="left:18.6px;top:477px;" width="2.4" height="2.4" viewBox="0 0 2.4 2.4"><path d="M2.400 0V2.400H0z" fill="#bdbdbd"/></svg>
<div style="left:867.5px;top:40px;width:332.5px;height:7px;background:#3f3f3f;"></div>
<svg style="left:905.5px;top:41.8px;" width="6" height="4" viewBox="0 0 6 4"><path d="M2.100 0.300L0.300 2L2.100 3.700zM4.800 0.300L3 2L4.800 3.700z" fill="#d0d0d0"/></svg>
<svg style="left:1115px;top:41.8px;" width="6" height="4" viewBox="0 0 6 4"><path d="M0.300 0.300L2.100 2L0.300 3.700zM3 0.300L4.800 2L3 3.700z" fill="#d0d0d0"/></svg>
<svg style="left:1191px;top:41.8px;" width="6" height="4" viewBox="0 0 6 4"><path d="M2.100 0.300L0.300 2L2.100 3.700zM4.800 0.300L3 2L4.800 3.700z" fill="#d0d0d0"/></svg>
<div style="left:870px;top:47px;width:44.3px;height:602px;background:#535353;"></div>
<div style="left:870px;top:72px;width:44.3px;height:1.2px;background:#3c3c3c;"></div>
<div style="left:870px;top:115px;width:44.3px;height:1.2px;background:#3c3c3c;"></div>
<div style="left:870px;top:158.5px;width:44.3px;height:1.2px;background:#3c3c3c;"></div>
<div style="left:886px;top:49.5px;width:13px;height:1px;background:#4c4c4c;"></div>
<div style="left:886px;top:75px;width:13px;height:1px;background:#4c4c4c;"></div>
<div style="left:886px;top:118px;width:13px;height:1px;background:#4c4c4c;"></div>
<svg style="left:877px;top:55.5px;" width="12" height="12" viewBox="0 0 12 12"><rect x="0.800" y="0.800" width="2.600" height="2.600" fill="none" stroke="#d4d4d4" stroke-width="0.900"/><rect x="0.800" y="4.300" width="2.600" height="2.600" fill="none" stroke="#d4d4d4" stroke-width="0.900"/><rect x="0.500" y="7.800" width="3.200" height="3.200" fill="#e0e0e0"/><path d="M6.200 10.200C10.400 9.200 10.600 3.400 6.800 2.400" fill="none" stroke="#d4d4d4" stroke-width="1.200"/><path d="M5.200 2.600L8 0.600V4.200z" fill="#d4d4d4"/></svg>
<svg style="left:875px;top:81.5px;" width="14" height="13" viewBox="0 0 14 13"><path d="M12.800 1L8.200 6.200" stroke="#d6d6d6" stroke-width="2.200" stroke-linecap="round" fill="none"/><path d="M8.600 6.600L7.200 5.400C5.400 5.600 4.400 7 4.600 8.600C4.500 9.800 3.600 10.600 2.600 11C5.200 12.200 8.400 10.800 8.600 6.600z" fill="#d6d6d6"/><path d="M0.700 0.900h1.300M0.700 2.900h1.300M0.700 4.900h1.300M3 0.900H4.300M3 2.900H4.300M3 4.900H4.300" stroke="#c8c8c8" stroke-width="1.200"/></svg>
<svg style="left:875px;top:99.5px;" width="14" height="11" viewBox="0 0 14 11"><path d="M3.500 2.300H12.500" stroke="#d6d6d6" stroke-width="1.700" fill="none"/><ellipse cx="2.800" cy="2.300" rx="2.300" ry="1.700" fill="#d6d6d6"/><path d="M0.800 7.800H8" stroke="#d6d6d6" stroke-width="1.700" fill="none"/><path d="M7.600 6.600L9 7.800L7.600 9z" fill="#d6d6d6"/><path d="M9.400 7.800C9.400 5.600 11 4.800 12.600 5V10.600C11 10.800 9.400 10 9.400 7.800z" fill="#d6d6d6"/></svg>
<span style="left:892.5px;top:99.10px;font-size:7.8px;line-height:12px;color:#e0e0e0;font-weight:bold;letter-spacing:0.060px;">К...</span>
<span style="left:878.300px;top:124.300px;font-size:12.500px;line-height:13px;color:#dcdcdc">A</span>
<div style="left:887.3px;top:125.5px;width:1px;height:11.5px;background:#d4d4d4;"></div>
<span style="left:892.5px;top:125.10px;font-size:7.8px;line-height:12px;color:#e0e0e0;font-weight:bold;letter-spacing:-0.158px;">С...</span>
<svg style="left:877.8px;top:141.5px;" width="10" height="12" viewBox="0 0 10 12"><path d="M4.200 0.400H9.200V1.700H8.300V11.600H7.100V1.700H5.900V11.600H4.700V6.600A3.100 3.100 0 0 1 4.200 0.400z" fill="#dcdcdc"/></svg>
<span style="left:892.5px;top:142.60px;font-size:7.8px;line-height:12px;color:#e0e0e0;font-weight:bold;letter-spacing:-0.158px;">А...</span>
<div style="left:1125.7px;top:47px;width:75px;height:602px;background:#535353;"></div>
<div style="left:1125.7px;top:72px;width:75px;height:1.2px;background:#3c3c3c;"></div>
<div style="left:1155px;top:49.5px;width:13px;height:1px;background:#4c4c4c;"></div>
<svg style="left:1131px;top:56px;" width="14" height="11" viewBox="0 0 14 11"><path d="M4 9.800A3 3 0 0 1 3.600 3.900A3.600 3.600 0 0 1 10.200 3.300A3.300 3.300 0 0 1 10.400 9.800z" fill="none" stroke="#d0d0d0" stroke-width="1"/><path d="M4.600 7.800A1.700 1.700 0 0 1 4.600 4.600C5.600 4.600 6.400 5.400 7.200 6.200S8.800 7.800 9.600 7.800A1.600 1.600 0 0 0 9.600 4.600" fill="none" stroke="#d0d0d0" stroke-width="0.900"/></svg>
<span style="left:1149px;top:56.70px;font-size:6.4px;line-height:12px;color:#e6e6e6;font-weight:bold;letter-spacing:-0.191px;">Библиотеки</span>
<div style="left:915.7px;top:47px;width:208px;height:123.5px;background:#535353;"></div>
<div style="left:915.7px;top:47px;width:208px;height:16.9px;background:#424242;"></div>
<div style="left:915.7px;top:47px;width:26.299999999999955px;height:16.9px;background:#535353;"></div>
<span style="left:921px;top:50.00px;font-size:6.7px;line-height:12px;color:#f2f2f2;font-weight:bold;letter-spacing:0.039px;">Цвет</span>
<div style="left:981.0px;top:47px;width:1px;height:16.9px;background:#4a4a4a;"></div>
<span style="left:948px;top:50.00px;font-size:6.7px;line-height:12px;color:#b4b4b4;font-weight:bold;letter-spacing:-0.417px;">Образцы</span>
<svg style="left:1113.7px;top:52.5px;" width="6.5" height="5" viewBox="0 0 6.5 5"><rect x="0" y="0" width="6.500" height="5" fill="#858585"/><path d="M0 1.650h6.500M0 3.350h6.500" stroke="#5a5a5a" stroke-width="0.500"/></svg>
<div style="left:943.700px;top:68.500px;width:147.300px;height:88.500px;background:linear-gradient(to bottom,rgba(0,0,0,0) 0%,rgba(0,0,0,0.17) 25%,rgba(0,0,0,0.45) 50%,rgba(0,0,0,0.745) 75%,rgba(0,0,0,0.91) 90%,#000 100%),linear-gradient(to right,#fff 0%,#ffce70 50%,#ffa400 96%,#ffa400 100%)"></div>
<svg style="left:1068.5px;top:80px;" width="8" height="8" viewBox="0 0 8 8"><circle cx="4" cy="4" r="3" fill="none" stroke="#1a1a1a" stroke-width="0.900"/></svg>
<div style="left:1101.800px;top:68.500px;width:12px;height:88.500px;background:linear-gradient(to bottom,#ff0000 0%,#ff00ff 16.600%,#0000ff 33.300%,#00ffff 50%,#00ff00 66.600%,#ffff00 83.300%,#ff0000 100%)"></div>
<svg style="left:1096.5px;top:145px;" width="5" height="5" viewBox="0 0 5 5"><path d="M0.500 0.300L4 2.500L0.500 4.700z" fill="#f0f0f0"/></svg>
<div style="left:928px;top:77px;width:11.6px;height:12px;background:#ffffff;border:0.8px solid #3e3e3e;box-sizing:border-box"></div>
<div style="left:921.8px;top:71.2px;width:11.4px;height:11px;background:#f0a000;border:0.9px solid #e6dccc;box-sizing:border-box;box-shadow:0 0 0 0.6px #3e3e3e"></div>
<svg style="left:920.4px;top:104px;" width="8" height="7.5" viewBox="0 0 8 7.5"><path d="M4 0.300L7.700 7.200H0.300z" fill="#e4e4e4"/><path d="M4 2.600V5M4 5.600v0.900" stroke="#3a3a3a" stroke-width="0.900"/></svg>
<div style="left:930.2px;top:104px;width:7.8px;height:7.4px;background:#e89c2a;border:0.9px solid #e8e0d0;box-sizing:border-box"></div>
<div style="left:915.7px;top:171.8px;width:208px;height:153.8px;background:#535353;"></div>
<div style="left:915.7px;top:171.8px;width:208px;height:18.6px;background:#424242;"></div>
<div style="left:915.7px;top:171.8px;width:40.299999999999955px;height:18.6px;background:#535353;"></div>
<span style="left:921px;top:176.45px;font-size:6.7px;line-height:12px;color:#f2f2f2;font-weight:bold;letter-spacing:-0.293px;">Свойства</span>
<div style="left:1002.0px;top:171.8px;width:1px;height:18.6px;background:#4a4a4a;"></div>
<span style="left:962px;top:176.45px;font-size:6.7px;line-height:12px;color:#b4b4b4;font-weight:bold;letter-spacing:-0.177px;">Коррекция</span>
<svg style="left:1113.7px;top:178.95000000000002px;" width="6.5" height="5" viewBox="0 0 6.5 5"><rect x="0" y="0" width="6.500" height="5" fill="#858585"/><path d="M0 1.650h6.500M0 3.350h6.500" stroke="#5a5a5a" stroke-width="0.500"/></svg>
<div style="left:923px;top:194px;width:13px;height:13px;background:#2d2d2d;"></div>
<svg style="left:925px;top:196.5px;" width="9" height="8" viewBox="0 0 9 8"><rect x="0.500" y="0.500" width="8" height="6.800" fill="none" stroke="#e4e4e4" stroke-width="0.900"/><path d="M1 6.800L3.400 3.600L5 5.400L6 4.400L8 6.800z" fill="#e4e4e4"/><circle cx="6.600" cy="2.400" r="0.700" fill="#e4e4e4"/></svg>
<span style="left:940px;top:196.80px;font-size:6.8px;line-height:12px;color:#e2e2e2;letter-spacing:-0.308px;">Свойства пиксельного слоя</span>
<div style="left:915.7px;top:210px;width:208px;height:1px;background:#4a4a4a;"></div>
<div style="left:1114px;top:212.5px;width:8.7px;height:97px;background:#4b4b4b;"></div>
<span style="left:921.5px;top:218.50px;font-size:6.4px;line-height:12px;color:#6f6f6f;">Ш:</span>
<div style="left:935px;top:218.8px;width:32.5px;height:9.3px;background:#4e4e4e;border:0.8px solid #626262;box-sizing:border-box"></div>
<span style="left:938.5px;top:218.60px;font-size:6.4px;line-height:12px;color:#6c6c6c;letter-spacing:-0.527px;">1,61 дюйм</span>
<span style="left:994px;top:218.50px;font-size:6.4px;line-height:12px;color:#6f6f6f;">В:</span>
<div style="left:1005px;top:218.8px;width:32.5px;height:9.3px;background:#4e4e4e;border:0.8px solid #626262;box-sizing:border-box"></div>
<span style="left:1008.5px;top:218.60px;font-size:6.4px;line-height:12px;color:#6c6c6c;letter-spacing:-0.148px;">1,6 дюйм</span>
<span style="left:923px;top:238.00px;font-size:6.4px;line-height:12px;color:#6f6f6f;">X:</span>
<div style="left:935px;top:238.3px;width:32.5px;height:9.3px;background:#4e4e4e;border:0.8px solid #626262;box-sizing:border-box"></div>
<span style="left:938.5px;top:238.10px;font-size:6.4px;line-height:12px;color:#6c6c6c;letter-spacing:-0.527px;">0,03 дюйм</span>
<span style="left:994.5px;top:238.00px;font-size:6.4px;line-height:12px;color:#6f6f6f;">Y:</span>
<div style="left:1005px;top:238.3px;width:32.5px;height:9.3px;background:#4e4e4e;border:0.8px solid #626262;box-sizing:border-box"></div>
<span style="left:1008.5px;top:238.10px;font-size:6.4px;line-height:12px;color:#6c6c6c;letter-spacing:-0.527px;">0,04 дюйм</span>
<div style="left:973px;top:216px;width:15px;height:15.5px;background:#2f2f2f;"></div>
<svg style="left:975.5px;top:221px;" width="10" height="6" viewBox="0 0 10 6"><circle cx="2.800" cy="3" r="2" fill="none" stroke="#e6e6e6" stroke-width="1.100"/><circle cx="7.200" cy="3" r="2" fill="none" stroke="#e6e6e6" stroke-width="1.100"/></svg>
<div style="left:915.7px;top:326.6px;width:208px;height:322.4px;background:#535353;"></div>
<div style="left:915.7px;top:326.6px;width:208px;height:18.6px;background:#424242;"></div>
<div style="left:915.7px;top:326.6px;width:27.299999999999955px;height:18.6px;background:#535353;"></div>
<span style="left:921px;top:331.25px;font-size:6.7px;line-height:12px;color:#f2f2f2;font-weight:bold;letter-spacing:-0.429px;">Слои</span>
<div style="left:977.5px;top:326.6px;width:1px;height:18.6px;background:#4a4a4a;"></div>
<span style="left:949px;top:331.25px;font-size:6.7px;line-height:12px;color:#b4b4b4;font-weight:bold;letter-spacing:-0.441px;">Каналы</span>
<div style="left:1017.0px;top:326.6px;width:1px;height:18.6px;background:#4a4a4a;"></div>
<span style="left:984.5px;top:331.25px;font-size:6.7px;line-height:12px;color:#b4b4b4;font-weight:bold;letter-spacing:-0.376px;">Контуры</span>
<svg style="left:1113.7px;top:333.75px;" width="6.5" height="5" viewBox="0 0 6.5 5"><rect x="0" y="0" width="6.500" height="5" fill="#858585"/><path d="M0 1.650h6.500M0 3.350h6.500" stroke="#5a5a5a" stroke-width="0.500"/></svg>
<div style="left:918.7px;top:351px;width:74px;height:10.2px;background:#4a4a4a;border-radius:1px"></div>
<svg style="left:922.5px;top:352.5px;" width="8" height="8" viewBox="0 0 8 8"><circle cx="3" cy="3" r="2.200" fill="none" stroke="#e6e6e6" stroke-width="1.200"/><path d="M4.800 4.800L7 7" stroke="#e6e6e6" stroke-width="1.500" stroke-linecap="round"/></svg>
<span style="left:932px;top:351.20px;font-size:6.6px;line-height:12px;color:#7a7a7a;letter-spacing:-0.313px;">Вид</span>
<svg style="left:985.5px;top:355px;" width="4" height="3" viewBox="0 0 4 3"><path d="M0.400 0.400L2 2.200L3.600 0.400" fill="none" stroke="#5e5e5e" stroke-width="0.800"/></svg>
<svg style="left:1020px;top:352.8px;" width="8.5" height="7.5" viewBox="0 0 8.5 7.5"><rect x="0.500" y="0.500" width="7.500" height="6.500" fill="none" stroke="#dadada" stroke-width="0.900"/><path d="M1.200 6.200L3.200 3.400L4.600 5L5.600 4.200L7.300 6.200z" fill="#dadada"/></svg>
<svg style="left:1035.8px;top:352.8px;" width="8" height="8" viewBox="0 0 8 8"><circle cx="4" cy="4" r="3.300" fill="none" stroke="#dadada" stroke-width="0.900"/><path d="M1.700 6.300A3.300 3.300 0 0 0 6.300 1.700z" fill="#dadada"/></svg>
<span style="left:1052px;top:352.200px;font-family:'Liberation Serif',serif;font-weight:bold;font-size:9.600px;line-height:12px;color:#dadada">T</span>
<svg style="left:1065.8px;top:352.6px;" width="8" height="8" viewBox="0 0 8 8"><rect x="1.400" y="1.400" width="5.200" height="5.200" fill="none" stroke="#dadada" stroke-width="0.900"/><rect x="0.200" y="0.200" width="2" height="2" fill="#dadada"/><rect x="5.800" y="0.200" width="2" height="2" fill="#dadada"/><rect x="0.200" y="5.800" width="2" height="2" fill="#dadada"/><rect x="5.800" y="5.800" width="2" height="2" fill="#dadada"/></svg>
<svg style="left:1081px;top:352.2px;" width="8" height="9" viewBox="0 0 8 9"><path d="M1.600 0.500H5L7.200 2.700V8.400H1.600z" fill="none" stroke="#dadada" stroke-width="0.900"/><path d="M5 0.500V2.700H7.200" fill="none" stroke="#dadada" stroke-width="0.800"/><rect x="0.200" y="5" width="3.600" height="3.600" fill="#dadada"/></svg>
<div style="left:1116px;top:350px;width:5.2px;height:11px;background:#3e3e3e;border-radius:2.6px"></div>
<div style="left:1116px;top:350px;width:5.2px;height:5.2px;background:#ececec;border-radius:2.6px"></div>
<div style="left:915.7px;top:364.3px;width:208px;height:1px;background:#484848;"></div>
<div style="left:918.4px;top:368.4px;width:113.6px;height:10.6px;background:#4d4d4d;border:0.8px solid #5c5c5c;box-sizing:border-box;border-radius:1px"></div>
<span style="left:923px;top:368.80px;font-size:6.6px;line-height:12px;color:#787878;letter-spacing:-0.308px;">Обычные</span>
<svg style="left:1024.5px;top:372.5px;" width="4" height="3" viewBox="0 0 4 3"><path d="M0.400 0.400L2 2.200L3.600 0.400" fill="none" stroke="#606060" stroke-width="0.800"/></svg>
<span style="left:1037px;top:368.80px;font-size:6.6px;line-height:12px;color:#e0e0e0;letter-spacing:-0.157px;">Непрозрачность:</span>
<div style="left:1089px;top:369px;width:21.5px;height:9.6px;background:#464646;"></div>
<span style="left:1092.5px;top:368.80px;font-size:6.4px;line-height:12px;color:#6e6e6e;letter-spacing:-0.467px;">100%</span>
<div style="left:1112px;top:369px;width:8.4px;height:9.6px;background:#464646;"></div>
<svg style="left:1113.5px;top:372.2px;" width="5.4" height="3.6" viewBox="0 0 5.4 3.6"><path d="M0.500 0.500L2.700 2.900L4.900 0.500" fill="none" stroke="#c4c4c4" stroke-width="0.900"/></svg>
<div style="left:915.7px;top:382px;width:208px;height:1px;background:#484848;"></div>
<span style="left:920px;top:386.40px;font-size:6.6px;line-height:12px;color:#dcdcdc;letter-spacing:-0.194px;">Закрепить:</span>
<svg style="left:957px;top:387.5px;" width="8" height="8" viewBox="0 0 8 8"><rect x="0.400" y="0.400" width="7.200" height="7.200" fill="none" stroke="#dadada" stroke-width="0.800"/><path d="M0.800 0.800h2.130v2.130h-2.130zM5.060 0.800h2.130v2.130h-2.130zM2.930 2.930h2.130v2.130h-2.130zM0.800 5.060h2.130v2.130h-2.130zM5.060 5.060h2.130v2.130h-2.130z" fill="#dadada"/></svg>
<svg style="left:970.5px;top:387px;" width="9" height="9" viewBox="0 0 9 9"><path d="M8 0.800L4.800 4.600" stroke="#dadada" stroke-width="1.700" stroke-linecap="round"/><path d="M5.300 4.300L3.900 3.900C2.500 4.100 1.900 5.300 2.100 6.500C2 7.300 1.400 7.900 0.600 8.200C2.700 9 5.300 8 5.500 5.200z" fill="#dadada"/></svg>
<svg style="left:984px;top:387px;" width="9" height="9" viewBox="0 0 9 9"><path d="M4.500 0.400L5.900 2H5V4H7V3.100L8.600 4.500L7 5.900V5H5V7H5.900L4.500 8.600L3.100 7H4V5H2V5.900L0.400 4.500L2 3.100V4H4V2H3.100z" fill="#dadada"/></svg>
<svg style="left:998px;top:387px;" width="10" height="9" viewBox="0 0 10 9"><path d="M2.600 0.400V6.800H9.400M0.400 2.600H7V8.800" fill="none" stroke="#dadada" stroke-width="0.900"/><path d="M5.400 0.800L7.600 3" stroke="#dadada" stroke-width="0.800" stroke-dasharray="1 0.700"/></svg>
<svg style="left:1012px;top:386.5px;" width="8" height="9.5" viewBox="0 0 8 9.5"><rect x="0.800" y="4" width="6.400" height="5" rx="0.500" fill="#dadada"/><path d="M2.200 4V2.800a1.800 1.800 0 0 1 3.600 0V4" fill="none" stroke="#dadada" stroke-width="1"/><rect x="3.500" y="5.600" width="1" height="1.800" fill="#535353"/></svg>
<span style="left:1061px;top:386.70px;font-size:6.6px;line-height:12px;color:#e0e0e0;letter-spacing:-0.217px;">Заливка:</span>
<div style="left:1089px;top:387px;width:21.5px;height:9.6px;background:#464646;"></div>
<span style="left:1092.5px;top:386.80px;font-size:6.4px;line-height:12px;color:#6e6e6e;letter-spacing:-0.467px;">100%</span>
<div style="left:1112px;top:387px;width:8.4px;height:9.6px;background:#464646;"></div>
<svg style="left:1113.5px;top:390.2px;" width="5.4" height="3.6" viewBox="0 0 5.4 3.6"><path d="M0.500 0.500L2.700 2.900L4.900 0.500" fill="none" stroke="#c4c4c4" stroke-width="0.900"/></svg>
<div style="left:915.7px;top:400.6px;width:208px;height:232.4px;background:#4d4d4d;"></div>
<div style="left:1114.2px;top:400.6px;width:9.5px;height:232.4px;background:#4f4f4f;"></div>
<div style="left:915.7px;top:401.3px;width:198.5px;height:24.9px;background:#6b6b6b;"></div>
<div style="left:915.7px;top:401.3px;width:18.3px;height:24.9px;background:#565656;"></div>
<svg style="left:920.8px;top:411.7px;" width="9" height="6" viewBox="0 0 9 6"><path d="M0.200 3C2 -0.200 7 -0.200 8.800 3C7 6.200 2 6.200 0.200 3z" fill="#ececec"/><circle cx="4.500" cy="3" r="1.600" fill="#4a4a4a"/></svg>
<span style="left:962px;top:408.90px;font-size:6.8px;line-height:12px;color:#f0f0f0;letter-spacing:-0.368px;">Слой 1</span>
<div style="left:915.7px;top:633px;width:208px;height:16px;background:#535353;"></div>
<div style="left:915.7px;top:633px;width:208px;height:0.8px;background:#484848;"></div>
<svg style="left:996.5px;top:638.5px;" width="9" height="5" viewBox="0 0 9 5"><rect x="0.500" y="0.800" width="4.200" height="3.400" rx="1.700" fill="none" stroke="#7a7a7a" stroke-width="0.900"/><rect x="4.300" y="0.800" width="4.200" height="3.400" rx="1.700" fill="none" stroke="#7a7a7a" stroke-width="0.900"/></svg>
<span style="left:1015.600px;top:635.300px;font-style:italic;font-size:9.400px;line-height:11px;color:#e4e4e4;letter-spacing:-0.500px">fx</span>
<div style="left:1022.5px;top:645.4px;width:1.2px;height:1.2px;background:#d0d0d0;"></div>
<svg style="left:1031px;top:637.5px;" width="9" height="7" viewBox="0 0 9 7"><rect x="0" y="0" width="9" height="7" fill="#d6d6d6"/><circle cx="4.500" cy="3.500" r="2.200" fill="#3a3a3a"/></svg>
<svg style="left:1048.5px;top:637.3px;" width="8" height="8" viewBox="0 0 8 8"><circle cx="4" cy="4" r="3.300" fill="none" stroke="#d6d6d6" stroke-width="0.900"/><path d="M1.700 6.300A3.300 3.300 0 0 0 6.300 1.700z" fill="#d6d6d6"/></svg>
<div style="left:1056.3px;top:645.4px;width:1.2px;height:1.2px;background:#d0d0d0;"></div>
<svg style="left:1065px;top:637.5px;" width="9" height="7" viewBox="0 0 9 7"><path d="M0 0.800h3.400l0.800 1H9V7H0z" fill="#d6d6d6"/></svg>
<svg style="left:1082.5px;top:637.3px;" width="8" height="8" viewBox="0 0 8 8"><path d="M0.600 0.600H7.400V7.400H3.200L0.600 4.800z" fill="none" stroke="#d6d6d6" stroke-width="1"/><path d="M0.600 4.800H3.200V7.400" fill="#2e2e2e" stroke="#d6d6d6" stroke-width="0.800"/></svg>
<svg style="left:1100px;top:637px;" width="7" height="8.5" viewBox="0 0 7 8.5"><path d="M0.300 1.600H6.700M2.400 1.400V0.500H4.600V1.400M1 2.400L1.400 8H5.600L6 2.400" fill="none" stroke="#7c7c7c" stroke-width="0.900"/><path d="M2.600 3.400V6.800M4.400 3.400V6.800" stroke="#7c7c7c" stroke-width="0.600"/></svg>
<div style="left:421.5px;top:327.5px;width:52.6px;height:52.6px;background:#161616;"></div>
<div style="left:422.3px;top:328.3px;width:51px;height:51px;background:conic-gradient(#d2d2d2 25%,#ffffff 0 50%,#d2d2d2 0 75%,#ffffff 0) 0 0/10.000px 10.000px"></div>
<svg style="left:422.3px;top:328.3px;overflow:hidden" width="51" height="51" viewBox="65 65 520 520" preserveAspectRatio="none"><path d="M95 250C90 200 115 180 130 185C160 190 170 230 165 270C160 310 140 335 132 340C120 335 98 300 95 250z" fill="#b9bcc0" stroke="#55595e" stroke-width="11.9"/>
<path d="M130 190V335M110 215Q120 290 130 335M152 215Q142 290 132 335" fill="none" stroke="#6c7075" stroke-width="6.8"/>
<path d="M132 338L122 470" stroke="#2a2a2a" stroke-width="22.1" stroke-linecap="round"/>
<path d="M128 395L122 448" stroke="#c8232c" stroke-width="20.4"/>
<path d="M105 425C95 455 110 485 130 490L185 580H225L165 465C160 440 140 425 105 425z" fill="#fbe6cc" stroke="#5a3a28" stroke-width="6.8"/>
<path d="M255 320C250 360 270 420 320 470L350 420L300 310z" fill="#f0901c" stroke="#6a3404" stroke-width="6.8"/>
<path d="M400 285C470 270 505 300 510 370C515 420 505 440 470 450C450 430 430 400 420 360z" fill="#f0901c" stroke="#6a3404" stroke-width="6.8"/>
<path d="M290 320C280 380 310 440 375 445C430 430 455 380 440 300C400 280 330 290 290 320z" fill="#fbe6cc" stroke="#5a3a28" stroke-width="6.8"/>
<path d="M285 330C300 300 330 305 345 325C330 315 305 320 295 345zM390 300C420 290 445 300 450 330C435 315 410 315 395 325z" fill="#f0901c"/>
<ellipse cx="322" cy="352" rx="11" ry="9" fill="#6a4420"/><path d="M306 342h30M385 338q15-12 32 0" fill="none" stroke="#3a2a1a" stroke-width="10.2" stroke-linecap="round"/>
<path d="M350 405q15 8 28 0" fill="none" stroke="#a0522d" stroke-width="6.8"/>
<path d="M300 470C280 500 275 540 280 580H560C560 520 520 470 470 455C430 470 360 480 300 470z" fill="#fafafa" stroke="#5a5a5a" stroke-width="8.5"/>
<path d="M420 520q20 30 60 20M440 490l10 40" fill="none" stroke="#6a6a6a" stroke-width="6.8"/>
<path d="M365 465C400 470 440 455 465 445L455 470C430 480 400 485 385 490L375 580H340L370 495z" fill="#e0343c" stroke="#8e1a20" stroke-width="6.8"/>
<path d="M200 215C175 175 200 130 250 125C270 85 350 70 400 95C460 75 545 110 555 175C575 220 550 270 505 290L480 215L265 265L250 255C225 250 210 235 200 215z" fill="#ffffff" stroke="#2e2e2e" stroke-width="10.2"/>
<path d="M300 200q10-35 5-55M380 180q25-20 35-50M440 195q30-15 30-50" fill="none" stroke="#555" stroke-width="6.8"/>
<path d="M255 255C320 225 410 205 480 205L490 270C420 270 330 290 272 320z" fill="#ffffff" stroke="#2e2e2e" stroke-width="10.2"/></svg>
<div style="left:936.3px;top:403.3px;width:20.9px;height:20.9px;background:#ffffff;border:1px solid #161616;box-sizing:border-box"></div>
<div style="left:937.4px;top:404.4px;width:18.7px;height:18.7px;background:conic-gradient(#d2d2d2 25%,#ffffff 0 50%,#d2d2d2 0 75%,#ffffff 0) 0 0/3.667px 3.667px"></div>
<svg style="left:937.4px;top:404.4px;overflow:hidden" width="18.7" height="18.7" viewBox="65 65 520 520" preserveAspectRatio="none"><path d="M95 250C90 200 115 180 130 185C160 190 170 230 165 270C160 310 140 335 132 340C120 335 98 300 95 250z" fill="#b9bcc0" stroke="#55595e" stroke-width="11.9"/>
<path d="M130 190V335M110 215Q120 290 130 335M152 215Q142 290 132 335" fill="none" stroke="#6c7075" stroke-width="6.8"/>
<path d="M132 338L122 470" stroke="#2a2a2a" stroke-width="22.1" stroke-linecap="round"/>
<path d="M128 395L122 448" stroke="#c8232c" stroke-width="20.4"/>
<path d="M105 425C95 455 110 485 130 490L185 580H225L165 465C160 440 140 425 105 425z" fill="#fbe6cc" stroke="#5a3a28" stroke-width="6.8"/>
<path d="M255 320C250 360 270 420 320 470L350 420L300 310z" fill="#f0901c" stroke="#6a3404" stroke-width="6.8"/>
<path d="M400 285C470 270 505 300 510 370C515 420 505 440 470 450C450 430 430 400 420 360z" fill="#f0901c" stroke="#6a3404" stroke-width="6.8"/>
<path d="M290 320C280 380 310 440 375 445C430 430 455 380 440 300C400 280 330 290 290 320z" fill="#fbe6cc" stroke="#5a3a28" stroke-width="6.8"/>
<path d="M285 330C300 300 330 305 345 325C330 315 305 320 295 345zM390 300C420 290 445 300 450 330C435 315 410 315 395 325z" fill="#f0901c"/>
<ellipse cx="322" cy="352" rx="11" ry="9" fill="#6a4420"/><path d="M306 342h30M385 338q15-12 32 0" fill="none" stroke="#3a2a1a" stroke-width="10.2" stroke-linecap="round"/>
<path d="M350 405q15 8 28 0" fill="none" stroke="#a0522d" stroke-width="6.8"/>
<path d="M300 470C280 500 275 540 280 580H560C560 520 520 470 470 455C430 470 360 480 300 470z" fill="#fafafa" stroke="#5a5a5a" stroke-width="8.5"/>
<path d="M420 520q20 30 60 20M440 490l10 40" fill="none" stroke="#6a6a6a" stroke-width="6.8"/>
<path d="M365 465C400 470 440 455 465 445L455 470C430 480 400 485 385 490L375 580H340L370 495z" fill="#e0343c" stroke="#8e1a20" stroke-width="6.8"/>
<path d="M200 215C175 175 200 130 250 125C270 85 350 70 400 95C460 75 545 110 555 175C575 220 550 270 505 290L480 215L265 265L250 255C225 250 210 235 200 215z" fill="#ffffff" stroke="#2e2e2e" stroke-width="10.2"/>
<path d="M300 200q10-35 5-55M380 180q25-20 35-50M440 195q30-15 30-50" fill="none" stroke="#555" stroke-width="6.8"/>
<path d="M255 255C320 225 410 205 480 205L490 270C420 270 330 290 272 320z" fill="#ffffff" stroke="#2e2e2e" stroke-width="10.2"/></svg>
<svg style="left:935px;top:402px;" width="23.5" height="23.5" viewBox="0 0 23.5 23.5"><path d="M0.600 7V0.600H7M16.500 0.600H22.900V7M22.900 16.500V22.900H16.500M7 22.900H0.600V16.500" fill="none" stroke="#e2e2e2" stroke-width="1.200"/></svg>
<div style="left:416.2px;top:160px;width:357.2px;height:112.6px;border-radius:4px;box-shadow:0 0 0 1px #0a0a0a,1.5px 2px 7px 2px rgba(0,0,0,0.600)"></div>
<div style="left:416.2px;top:160px;width:357.2px;height:112.6px;border-radius:3.5px;box-sizing:border-box;border:0.9px solid #a4adb6;background:linear-gradient(104deg,#232c35 0%,#222b34 67%,#3d4750 74%,#666f78 82%,#6e7880 100%) top/100% 18px no-repeat,linear-gradient(to bottom,#707a82 0px,#68727a 40px,#35424e 75px,#1c2a38 108px);overflow:hidden"><div style="left:-6px;top:-3px;width:106px;height:22px;border-radius:9px;background:rgba(176,180,184,0.960);filter:blur(3.500px)"></div><div style="left:-1px;top:14px;width:4.400px;height:25.500px;background:linear-gradient(to bottom,#a6aaae,#d2d3d5)"></div><div style="left:351.8px;top:33.500px;width:4.600px;height:6px;background:#e6e8ea"></div></div>
<span style="left:421px;top:163.60px;font-size:7.9px;line-height:12px;color:#0c0c0c;letter-spacing:-0.356px;text-shadow:0 0 0.4px #0c0c0c">Параметры формата PNG</span>
<div style="left:740px;top:160.600px;width:29px;height:12px;border-radius:0 0 3px 3px;box-sizing:border-box;border:0.8px solid #6a2a22;border-top:none;background:linear-gradient(to bottom,#dc8a7c 0%,#d0594a 45%,#bb2a14 50%,#c94a2c 100%);box-shadow:0 0 0 0.7px rgba(220,225,230,0.550)"></div>
<span style="left:751.8px;top:160.70px;font-size:9.5px;line-height:12px;color:#ffffff;font-weight:bold;text-shadow:0 0 1.5px #40100a,0 0 1px #40100a">x</span>
<div style="left:420.300px;top:177.600px;width:348.600px;height:89.800px;box-sizing:border-box;border:0.9px solid #8e98a2;background:#535353"></div>
<div style="left:431px;top:193.300px;width:260px;height:64.300px;box-sizing:border-box;border:0.9px solid #474747;border-radius:1px;box-shadow:inset 0 0 0 0.6px #5a5a5a"></div>
<div style="left:440px;top:188px;width:57px;height:10px;background:#535353;"></div>
<span style="left:442.5px;top:187.10px;font-size:8.3px;line-height:12px;color:#e2e2e2;letter-spacing:-0.406px;text-shadow:0 0 0.2px #e2e2e2">Размер файла</span>
<svg style="left:436.05px;top:199.95px;" width="10" height="10" viewBox="0 0 10 10"><circle cx="5" cy="5" r="4.25" fill="#eeeeee"/><circle cx="5" cy="5" r="1.550" fill="#161616"/></svg>
<span style="left:448.7px;top:199.10px;font-size:8.3px;line-height:12px;color:#e2e2e2;letter-spacing:-0.346px;text-shadow:0 0 0.2px #e2e2e2">Большой файл размер (самое быстрое сохранение)</span>
<div style="left:445.5px;top:215.1px;width:8.2px;height:8.1px;background:#494949;box-sizing:border-box;border:0.9px solid #747474;border-radius:1.500px"></div>
<span style="left:457.5px;top:213.10px;font-size:8.3px;line-height:12px;color:#e2e2e2;letter-spacing:-0.265px;text-shadow:0 0 0.2px #e2e2e2">Чересстрочная развертка</span>
<svg style="left:436.05px;top:227.5px;" width="10" height="10" viewBox="0 0 10 10"><circle cx="5" cy="5" r="3.8" fill="#454545" stroke="#666666" stroke-width="0.900"/></svg>
<span style="left:449px;top:226.50px;font-size:8.3px;line-height:12px;color:#e2e2e2;letter-spacing:-0.332px;text-shadow:0 0 0.2px #e2e2e2">Средний размер файла (среднее время на сохранение)</span>
<svg style="left:436.05px;top:241.1px;" width="10" height="10" viewBox="0 0 10 10"><circle cx="5" cy="5" r="3.8" fill="#454545" stroke="#666666" stroke-width="0.900"/></svg>
<span style="left:449px;top:240.10px;font-size:8.3px;line-height:12px;color:#e2e2e2;letter-spacing:-0.371px;text-shadow:0 0 0.2px #e2e2e2">Самый маленький размер файла (самое медленное сохранение)</span>
<div style="left:697px;top:188.300px;width:62px;height:16.400px;border-radius:8.200px;box-sizing:border-box;border:1px solid #cfcfcf"></div>
<span style="left:721.7px;top:190.50px;font-size:8.3px;line-height:12px;color:#f2f2f2;letter-spacing:0.304px;text-shadow:0 0 0.2px #e2e2e2">OK</span>
<div style="left:697px;top:210.200px;width:62px;height:16.400px;border-radius:8.200px;box-sizing:border-box;border:1px solid #6f6f6f"></div>
<span style="left:714.7px;top:212.40px;font-size:8.3px;line-height:12px;color:#ececec;letter-spacing:-0.463px;text-shadow:0 0 0.2px #e2e2e2">Отмена</span>
<div style="left:0;top:649.400px;width:1200px;height:5.600px;background:linear-gradient(to right,#2a86d2 0px,#1d8bdb 300px,#3f9fe0 440px,#8fbde8 462px,#aecbea 520px,#a9c9ee 700px,#a6c6ec 1000px,#b8d5f4 1050px,#7aa3d8 1085px,#4d7bb8 1125px,#123466 1146px,#0c2b5a 1190px)"></div>
<div style="left:0px;top:648.6px;width:1200px;height:0.8px;background:#30302f;"></div>
<div style="left:0px;top:649.4px;width:1200px;height:0.6px;background:#58a6e0;"></div>
<div style="left:7.500px;top:651.600px;width:17px;height:12px;border-radius:50%;background:radial-gradient(circle at 50% 60%,#6a8fb5 0%,#8fa6bd 60%,#dfe6ee 100%);border:1px solid #cfd8e2"></div>
<div style="left:37px;top:649.800px;width:36px;height:8px;box-sizing:border-box;border:1px solid #e6f0fa;border-radius:2px 2px 0 0;background:#9fc7ea"></div>
<div style="left:47px;top:654px;width:7px;height:2px;background:#cbb670;"></div>
<div style="left:87.500px;top:652.300px;width:13px;height:12px;border-radius:50%;background:#4cc232"></div>
<div style="left:165px;top:652px;width:13px;height:12px;border-radius:50%;background:#e53528"></div>
<div style="left:205px;top:653px;width:10px;height:10px;border-radius:50%;background:#f4f6f8"></div>
<div style="left:231px;top:649.800px;width:34.500px;height:8px;box-sizing:border-box;border:1px solid #f2f7fc;border-radius:2px 2px 0 0;background:#c8dcef"></div>
<div style="left:239.5px;top:652px;width:16px;height:4px;background:#0d4a63;"></div>
<div style="left:475px;top:651px;width:10px;height:3px;background:#33475c;filter:blur(1px)"></div>
<div style="left:498px;top:651px;width:22px;height:3px;background:#394c62;filter:blur(1.2px)"></div>
<div style="left:1190.5px;top:649.5px;width:9.5px;height:6px;background:#7f90ad;border-left:1px solid #a8b8d0;border-top:0.7px solid #a8b8d0"></div>
</div></body></html>
